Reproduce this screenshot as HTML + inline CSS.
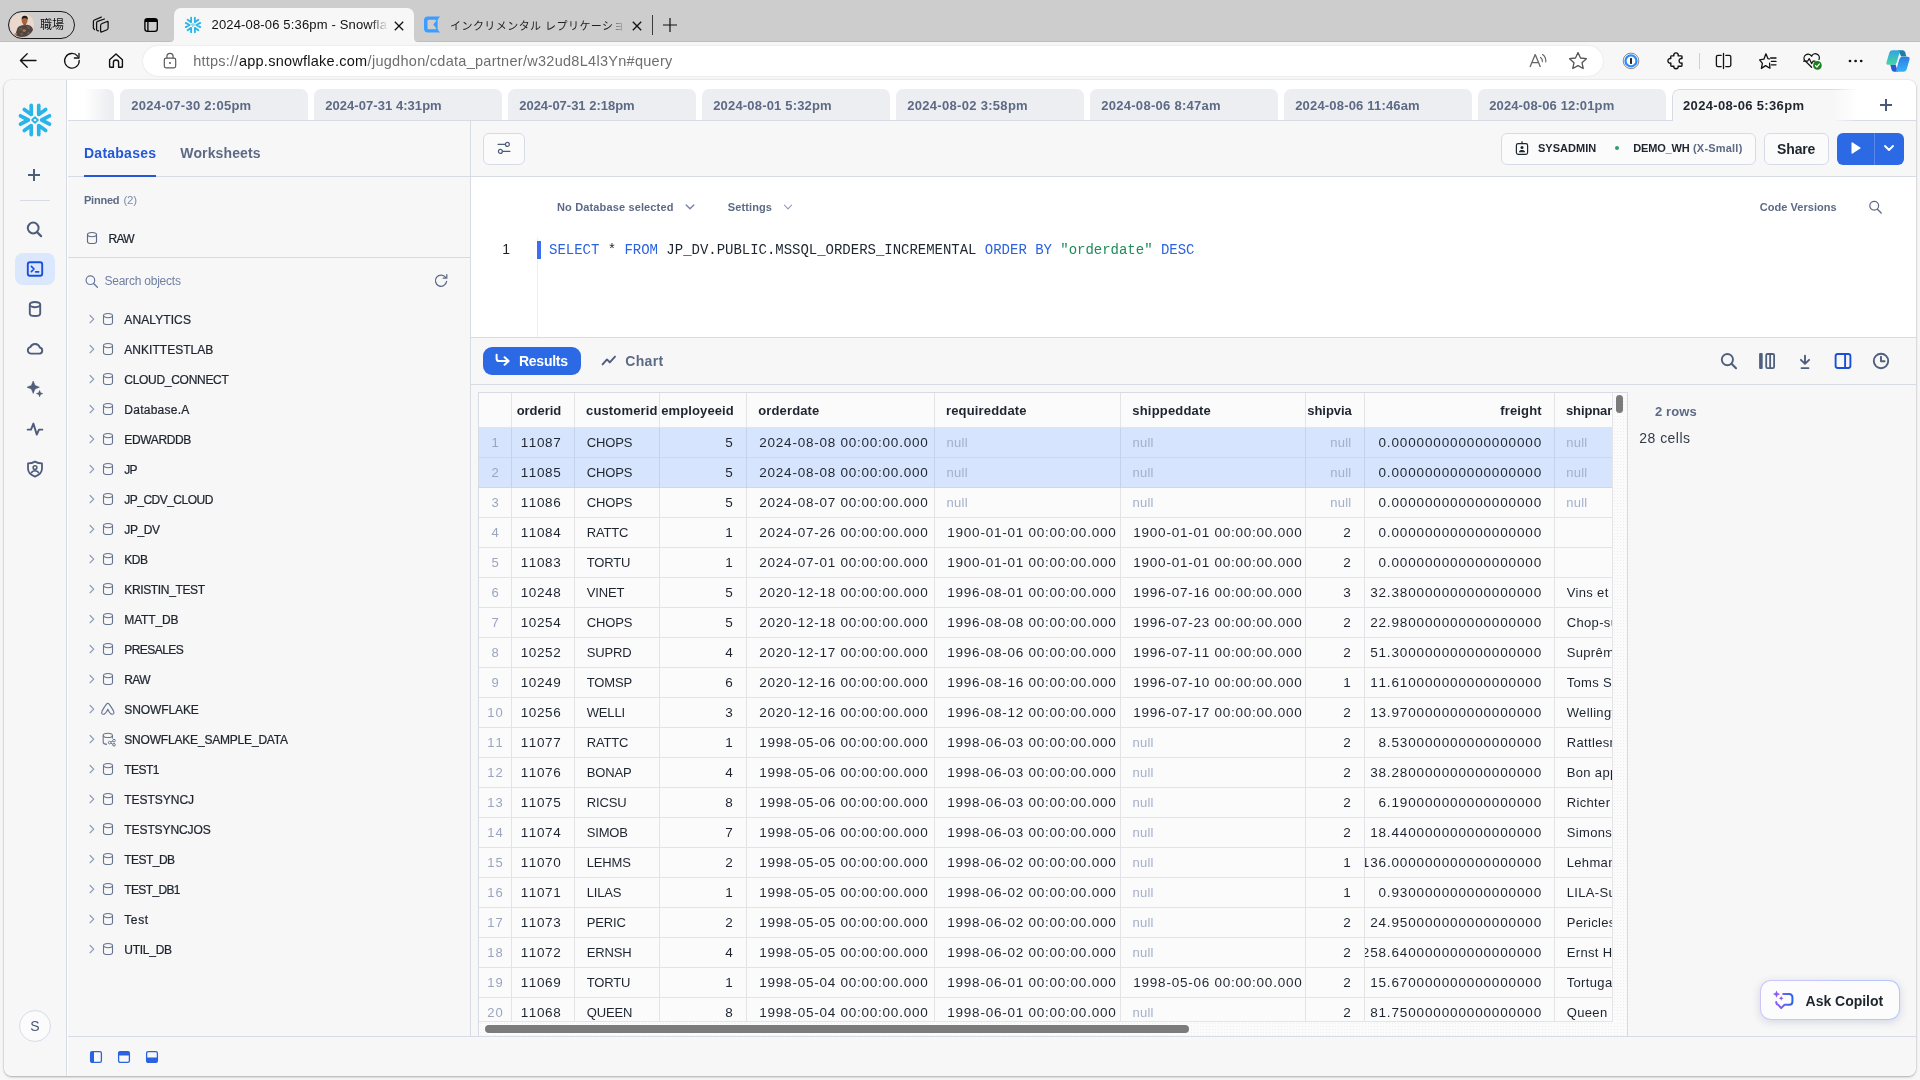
<!DOCTYPE html>
<html lang="ja"><head><meta charset="utf-8"><title>2024-08-06 5:36pm - Snowflake</title>
<style>
html,body{margin:0;padding:0}
body{width:1920px;height:1080px;position:relative;overflow:hidden;background:#f7f7f7;font-family:"Liberation Sans","Noto Sans CJK JP",sans-serif;}
div,svg{position:absolute;box-sizing:border-box}
div{white-space:pre}
.frame{left:4px;top:80px;width:1912px;height:996px;border-radius:8px;overflow:hidden;background:#fff;box-shadow:0 1px 2.5px rgba(0,0,0,.3),0 0 1px rgba(0,0,0,.25)}
.in{left:-4px;top:-80px;width:1920px;height:1080px}
.clip{overflow:hidden}
</style></head><body>
<div id="r" style="left:0;top:0;width:1920px;height:1080px;will-change:transform">
<div style="left:0px;top:0px;width:1920px;height:42px;background:#cdcdcd;"></div>
<div style="left:0px;top:41px;width:1920px;height:1px;background:#bebebe;"></div>
<div style="left:8px;top:11px;width:67px;height:27.5px;border:1px solid #1a1a1a;border-radius:14px;"></div>
<svg style="left:10px;top:13px;" width="24" height="24" viewBox="0 0 24 24"><defs><clipPath id="avc"><circle cx="12" cy="12" r="12"/></clipPath></defs><g clip-path="url(#avc)"><rect width="24" height="24" fill="#ead8cc"/><path d="M4.6 24.5 L7.4 15 Q8.6 12.6 12 12.2 L17.4 11.8 Q21.4 12.4 22.8 16 L23.6 19 L20 24.5Z" fill="#54433d"/><path d="M9 15.5 L12 14 L12.6 16.6 L9.6 18Z M17 13 L20 13.6 L19.4 16.4 L16.6 15.6Z M10 20 L13 19.4 L13.4 22 L10.6 22.6Z M16.6 19.4 L19.6 18.6 L20 21 L17 21.8Z" fill="#5b5a5c"/><ellipse cx="14.6" cy="7.6" rx="2.9" ry="3.7" fill="#a8633f"/><path d="M11.6 6.6 Q11.4 2.6 14.8 2.7 Q18.2 2.8 17.8 6.8 Q16.6 4.8 14.6 4.9 Q12.6 5 11.6 6.6Z" fill="#1c1917"/><path d="M13.4 10.2 Q14.6 11.6 15.9 10.2 L15.8 12.4 L13.4 12.4Z" fill="#8c4f33"/><ellipse cx="5" cy="21.4" rx="2.2" ry="1.1" fill="#c08662" transform="rotate(-25 5 21.4)"/><ellipse cx="14.2" cy="17.6" rx="1.7" ry="1.3" fill="#b4744f"/></g></svg>
<div style="left:40.00px;top:16.50px;font-size:12px;line-height:17px;color:#111;letter-spacing:-0.016px;">職場</div>
<svg style="left:92px;top:15px;" width="20" height="20" viewBox="0 0 20 20"><g fill="none" stroke="#111" stroke-width="1.25" stroke-linecap="round" stroke-linejoin="round"><path d="M9.3 2.1 L2.4 5 Q1.4 5.4 1.4 6.5 V12.8 Q1.4 13.6 2 14.1 L2.5 14.5"/><path d="M12.4 4 L5.6 6.45 Q4.6 6.8 4.6 7.9 V14.6 Q4.6 15.4 5.4 15.6 L6.5 15.9"/><rect x="8.6" y="12.75" width="7.5" height="8.2" rx="1.3" transform="skewY(-22.4)"/></g></svg>
<svg style="left:141px;top:15px;" width="20" height="20" viewBox="0 0 20 20"><rect x="3.9" y="3.7" width="12.4" height="12.6" rx="2.6" fill="none" stroke="#000" stroke-width="1.35"/><path d="M3.9 6.3 a2.6 2.6 0 0 1 2.6 -2.6 h7.2 a2.6 2.6 0 0 1 2.6 2.6 v0.7 h-12.4z" fill="#000"/><path d="M6.9 6.8 V16.3" stroke="#000" stroke-width="1.3"/></svg>
<div style="left:173.5px;top:8px;width:240.5px;height:34px;background:#f7f7f7;border-radius:7px 7px 0 0;"></div>
<svg style="left:169.5px;top:38px;" width="4" height="4" viewBox="0 0 4 4"><path d="M4 0 V4 H0 A4 4 0 0 0 4 0Z" fill="#f7f7f7"/></svg>
<svg style="left:414px;top:38px;" width="4" height="4" viewBox="0 0 4 4"><path d="M0 0 V4 H4 A4 4 0 0 1 0 0Z" fill="#f7f7f7"/></svg>
<svg style="left:184px;top:16px;" width="18" height="18" viewBox="0 0 18 18"><path d="M7.12 1.70 L7.12 6.20 L3.65 3.75M7.12 16.30 L7.12 11.80 L3.65 14.25M1.75 6.90 L5.65 9.00 L1.75 11.10M10.88 1.70 L10.88 6.20 L14.35 3.75M10.88 16.30 L10.88 11.80 L14.35 14.25M16.25 6.90 L12.35 9.00 L16.25 11.10" stroke="#29b5e8" stroke-width="1.85" stroke-linecap="round" stroke-linejoin="round" fill="none"/><path d="M9.00 7.55 L10.45 9.00 L9.00 10.45 L7.55 9.00Z" stroke="#29b5e8" stroke-width="0.90" stroke-linejoin="round" fill="none"/></svg>
<div class="clip" style="left:211.5px;top:14px;width:177px;height:22px;-webkit-mask-image:linear-gradient(90deg,#000 158px,transparent 176px);mask-image:linear-gradient(90deg,#000 158px,transparent 176px)"><div style="left:0;top:2px;font-size:13px;line-height:18px;color:#111;letter-spacing:0.158px">2024-08-06 5:36pm - Snowflake</div></div>
<svg style="left:392.5px;top:19.5px;" width="12" height="12" viewBox="0 0 12 12"><path d="M1.8 1.8 L10.2 10.2 M10.2 1.8 L1.8 10.2" stroke="#111" stroke-width="1.3" fill="none"/></svg>
<svg style="left:423px;top:16px;" width="18" height="17" viewBox="0 0 18 17"><path fill-rule="evenodd" d="M5 0.5 H17 L14.6 3.8 V13.2 L17 16.5 H5 A4 4 0 0 1 1 12.5 V4.5 A4 4 0 0 1 5 0.5Z M5.8 3.8 H12.8 L13 5 L10.3 8.5 L13 12 L12.8 13.2 H5.8 A1.3 1.3 0 0 1 4.5 11.9 V5.1 A1.3 1.3 0 0 1 5.8 3.8Z" fill="#3b9dff"/></svg>
<div class="clip" style="left:450px;top:14px;width:178px;height:22px;-webkit-mask-image:linear-gradient(90deg,#000 160px,transparent 176px);mask-image:linear-gradient(90deg,#000 160px,transparent 176px)"><div style="left:0;top:2.5px;font-size:11px;line-height:18px;color:#222;letter-spacing:0.444px">インクリメンタル レプリケーション</div></div>
<svg style="left:631px;top:19.5px;" width="12" height="12" viewBox="0 0 12 12"><path d="M1.8 1.8 L10.2 10.2 M10.2 1.8 L1.8 10.2" stroke="#111" stroke-width="1.3" fill="none"/></svg>
<div style="left:652px;top:15px;width:1px;height:20px;background:#3a3a3a;"></div>
<svg style="left:662px;top:17px;" width="16" height="16" viewBox="0 0 16 16"><path d="M8 1 V15 M1 8 H15" stroke="#111" stroke-width="1.2" fill="none"/></svg>
<div style="left:0px;top:42px;width:1920px;height:38px;background:#f7f7f7;"></div>
<svg style="left:18px;top:51px;" width="20" height="20" viewBox="0 0 20 20"><path d="M18 9.5 H2.6 M9.2 2.8 L2.4 9.5 L9.2 16.3" stroke="#111" stroke-width="1.3" fill="none" stroke-linecap="round" stroke-linejoin="round"/></svg>
<svg style="left:62px;top:51px;" width="20" height="20" viewBox="0 0 20 20"><path d="M15.6 5.2 A7.3 7.3 0 1 0 17.2 9.4" stroke="#111" stroke-width="1.3" fill="none" stroke-linecap="round"/><path d="M17 2.3 V7 H12.4" stroke="#111" stroke-width="1.3" fill="none" stroke-linecap="round" stroke-linejoin="round"/></svg>
<svg style="left:106px;top:51px;" width="20" height="20" viewBox="0 0 20 20"><path d="M3.6 8.8 L10 3 L16.4 8.8 V15.4 A0.8 0.8 0 0 1 15.6 16.2 H12.6 V11.6 A2.6 2.6 0 0 0 7.4 11.6 V16.2 H4.4 A0.8 0.8 0 0 1 3.6 15.4Z" stroke="#111" stroke-width="1.4" fill="none" stroke-linejoin="round"/></svg>
<div style="left:143px;top:46px;width:1460px;height:30px;background:#fff;border-radius:15px;box-shadow:0 0 2px rgba(0,0,0,.12);"></div>
<svg style="left:160px;top:51px;" width="20" height="20" viewBox="0 0 20 20"><rect x="4.3" y="7.2" width="11.4" height="9.6" rx="1.8" fill="none" stroke="#5a5a5a" stroke-width="1.2"/><path d="M6.9 7.2 V5.4 A3.1 3.1 0 0 1 13.1 5.4 V7.2" fill="none" stroke="#5a5a5a" stroke-width="1.2"/><circle cx="10" cy="12" r="1" fill="#5a5a5a"/></svg>
<div style="left:193.20px;top:51.00px;font-size:14.5px;line-height:20px;color:#6e6e6e;letter-spacing:0.238px;">https://</div>
<div style="left:238.90px;top:51.00px;font-size:14.5px;line-height:20px;color:#111;letter-spacing:0.255px;">app.snowflake.com</div>
<div style="left:367.60px;top:51.00px;font-size:14.5px;line-height:20px;color:#6e6e6e;letter-spacing:0.281px;">/jugdhon/cdata_partner/w32ud8L4l3Yn#query</div>
<svg style="left:1527px;top:50px;" width="22" height="22" viewBox="0 0 22 22"><path d="M3 17 L8.2 4.6 L13.4 17 M4.9 12.6 H11.5" stroke="#666" stroke-width="1.3" fill="none" stroke-linejoin="round"/><path d="M13.6 7.4 A4.5 4.5 0 0 1 15.4 11.6 M15.6 4.6 A8 8 0 0 1 18.8 11.8" stroke="#666" stroke-width="1.2" fill="none" stroke-linecap="round"/></svg>
<svg style="left:1567px;top:50px;" width="22" height="22" viewBox="0 0 22 22"><path d="M11 2.6 L13.5 8 L19.4 8.7 L15 12.7 L16.2 18.5 L11 15.6 L5.8 18.5 L7 12.7 L2.6 8.7 L8.5 8Z" stroke="#555" stroke-width="1.3" fill="none" stroke-linejoin="round"/></svg>
<svg style="left:1620px;top:50px;" width="22" height="22" viewBox="0 0 22 22"><circle cx="11" cy="10.9" r="7.8" fill="#fff" stroke="#6a6a6a" stroke-width="0.8"/><circle cx="11" cy="10.9" r="5.5" fill="#fff" stroke="#2b8bff" stroke-width="2.3"/><rect x="10.1" y="7.9" width="1.8" height="6.1" rx="0.4" fill="#111"/></svg>
<svg style="left:1664px;top:50px;" width="22" height="22" viewBox="0 0 22 22"><path d="M7.6 5.8 H9.9 C9.4 4.2 10.4 2.9 12 2.9 C13.6 2.9 14.6 4.2 14.1 5.8 H17.2 Q18 5.8 18 6.6 V8.6 C16.4 8.1 15.1 9.2 15.1 10.8 C15.1 12.4 16.4 13.5 18 13 V15.4 Q18 16.2 17.2 16.2 H14.1 C14.6 17.6 13.6 18.7 12 18.7 C10.4 18.7 9.4 17.6 9.9 16.2 H7.6 Q6.8 16.2 6.8 15.4 V13 C5.2 13.5 3.9 12.4 3.9 10.8 C3.9 9.2 5.2 8.1 6.8 8.6 V6.6 Q6.8 5.8 7.6 5.8Z" stroke="#111" stroke-width="1.35" fill="none" stroke-linejoin="round"/></svg>
<div style="left:1699px;top:53px;width:1px;height:16px;background:#cfcfcf;"></div>
<svg style="left:1712px;top:50px;" width="22" height="22" viewBox="0 0 22 22"><path d="M9.2 5.3 H6 A1.6 1.6 0 0 0 4.4 6.9 V15 A1.6 1.6 0 0 0 6 16.6 H9.2 M13.8 5.3 H17.2 A1.6 1.6 0 0 1 18.8 6.9 V15 A1.6 1.6 0 0 1 17.2 16.6 H13.8 M11.5 3.3 V18.6" stroke="#111" stroke-width="1.3" fill="none" stroke-linecap="round"/></svg>
<svg style="left:1757px;top:50px;" width="22" height="22" viewBox="0 0 22 22"><path d="M12.6 13.2 L12.9 18.2 L8.6 15.6 L4.4 18.4 L5.4 13.4 L2.6 9.9 L6.9 9.2 L8.9 3.8 L10.9 8.6 L12.4 8.8" stroke="#111" stroke-width="1.3" fill="none" stroke-linejoin="round" stroke-linecap="round"/><path d="M13.6 8 H19 M14.4 11.4 H19 M14.4 14.8 H19" stroke="#111" stroke-width="1.3" fill="none" stroke-linecap="round"/></svg>
<svg style="left:1800px;top:50px;" width="24" height="22" viewBox="0 0 24 22"><path d="M11.6 17.2 L4.6 10.4 A3.9 3.9 0 0 1 11.6 6.2 A3.9 3.9 0 0 1 19 9.4" stroke="#111" stroke-width="1.3" fill="none" stroke-linecap="round" stroke-linejoin="round"/><path d="M3.6 11.2 H7.6 L9.2 8.6 L11.6 13.6 L13 11.2 H15" stroke="#111" stroke-width="1.2" fill="none" stroke-linejoin="round" stroke-linecap="round"/><circle cx="17.4" cy="15.4" r="4.3" fill="#1a7f1a"/><path d="M15.4 15.5 L16.9 17 L19.5 13.9" stroke="#fff" stroke-width="1.2" fill="none" stroke-linecap="round" stroke-linejoin="round"/></svg>
<svg style="left:1845px;top:50px;" width="22" height="22" viewBox="0 0 22 22"><circle cx="5" cy="11" r="1.35" fill="#111"/><circle cx="10.6" cy="11" r="1.35" fill="#111"/><circle cx="16.2" cy="11" r="1.35" fill="#111"/></svg>
<svg style="left:1885px;top:48px;" width="26" height="26" viewBox="0 0 26 26"><defs><linearGradient id="cp1" x1="0" y1="0" x2="0" y2="1"><stop offset="0" stop-color="#2fa4e2"/><stop offset="1" stop-color="#48d6a2"/></linearGradient><linearGradient id="cp2" x1="0" y1="0" x2="0" y2="1"><stop offset="0" stop-color="#2f7ce6"/><stop offset="1" stop-color="#36b2f6"/></linearGradient></defs><path d="M13 2.2 H17.6 Q19.6 2.2 20.2 4.2 L21.4 8.4 H16.2 Z" fill="#1f7da8"/><path d="M5.2 16.6 H10.6 L12.8 23.8 H9.2 Q7.2 23.8 6.6 21.8 Z" fill="#2b57d9"/><path d="M7.6 2.2 H15.2 L11.8 14.2 Q11.1 16.8 8.6 16.8 H3.4 Q0.8 16.8 1.5 14.2 L4.4 4.4 Q5.1 2.2 7.6 2.2Z" fill="url(#cp1)"/><path d="M18.4 23.8 H10.8 L14.2 11.4 Q14.9 8.8 17.4 8.8 H22.6 Q25.2 8.8 24.5 11.4 L21.6 21.6 Q20.9 23.8 18.4 23.8Z" fill="url(#cp2)"/></svg>
<div class="frame"><div class="in">
<div style="left:4px;top:80px;width:63px;height:996px;background:#f7f7f7;border-right:1px solid #d6dbe6;"></div>
<svg style="left:17px;top:102px;" width="36" height="36" viewBox="0 0 36 36"><path d="M14.25 3.40 L14.25 12.40 L7.30 7.50M14.25 32.60 L14.25 23.60 L7.30 28.50M3.50 13.80 L11.30 18.00 L3.50 22.20M21.75 3.40 L21.75 12.40 L28.70 7.50M21.75 32.60 L21.75 23.60 L28.70 28.50M32.50 13.80 L24.70 18.00 L32.50 22.20" stroke="#29b5e8" stroke-width="3.70" stroke-linecap="round" stroke-linejoin="round" fill="none"/><path d="M18.00 15.10 L20.90 18.00 L18.00 20.90 L15.10 18.00Z" stroke="#29b5e8" stroke-width="1.80" stroke-linejoin="round" fill="none"/></svg>
<svg style="left:26px;top:167px;" width="16" height="16" viewBox="0 0 16 16"><path d="M8 2 V14 M2 8 H14" stroke="#4f5d7c" stroke-width="2" fill="none"/></svg>
<div style="left:20px;top:200px;width:30px;height:1px;background:#d6dbe6;"></div>
<svg style="left:25px;top:219.5px;" width="20" height="20" viewBox="0 0 20 20"><circle cx="8.2" cy="8" r="5.4" fill="none" stroke="#4f5d7c" stroke-width="2"/><path d="M12.2 12.2 L16.1 16.1" stroke="#4f5d7c" stroke-width="2.2" stroke-linecap="round"/></svg>
<div style="left:15px;top:253px;width:40px;height:32px;background:#dbe7fd;border-radius:8px;"></div>
<svg style="left:25px;top:259px;" width="20" height="20" viewBox="0 0 20 20"><rect x="2.8" y="3.2" width="14.4" height="13.6" rx="2" fill="none" stroke="#1b4fd8" stroke-width="1.9"/><path d="M6.4 7.4 L9 10 L6.4 12.6 M10.6 12.8 H13.6" stroke="#1b4fd8" stroke-width="1.7" fill="none" stroke-linecap="round" stroke-linejoin="round"/></svg>
<svg style="left:25px;top:299px;" width="20" height="20" viewBox="0 0 20 20"><ellipse cx="10" cy="5.6" rx="5.2" ry="2.6" fill="none" stroke="#4f5d7c" stroke-width="1.9"/><path d="M4.8 5.6 V14.4 A5.2 2.6 0 0 0 15.2 14.4 V5.6" fill="none" stroke="#4f5d7c" stroke-width="1.9"/></svg>
<svg style="left:24px;top:339px;" width="22" height="20" viewBox="0 0 22 20"><path d="M6.8 14.6 A3.3 3.3 0 0 1 6.4 8.1 A5 5 0 0 1 15.8 8.5 A3.1 3.1 0 0 1 15.6 14.6 Z" fill="none" stroke="#4f5d7c" stroke-width="1.9" stroke-linejoin="round"/></svg>
<svg style="left:25px;top:379px;" width="20" height="20" viewBox="0 0 20 20"><path d="M8.2 2 L10 6.4 L14.4 8.2 L10 10 L8.2 14.4 L6.4 10 L2 8.2 L6.4 6.4Z" fill="#4f5d7c" stroke="#4f5d7c" stroke-width="0.6" stroke-linejoin="round"/><path d="M14.6 11.4 L15.5 13.7 L17.8 14.6 L15.5 15.5 L14.6 17.8 L13.7 15.5 L11.4 14.6 L13.7 13.7Z" fill="#4f5d7c" stroke="#4f5d7c" stroke-width="0.5" stroke-linejoin="round"/></svg>
<svg style="left:25px;top:419px;" width="20" height="20" viewBox="0 0 20 20"><path d="M2.6 10.6 H6 L8.4 4.6 L11.8 15.6 L14 10.6 H17.4" fill="none" stroke="#4f5d7c" stroke-width="1.9" stroke-linejoin="round" stroke-linecap="round"/></svg>
<svg style="left:25px;top:459px;" width="20" height="20" viewBox="0 0 20 20"><path d="M10 2.6 C12.4 4 14.6 4.4 17 4.4 V9.6 C17 13.6 14 16.2 10 17.6 C6 16.2 3 13.6 3 9.6 V4.4 C5.4 4.4 7.6 4 10 2.6Z" fill="none" stroke="#4f5d7c" stroke-width="1.8" stroke-linejoin="round"/><circle cx="10" cy="8.6" r="1.9" fill="none" stroke="#4f5d7c" stroke-width="1.5"/><path d="M6.2 14.2 C7 12.4 8.4 11.8 10 11.8 C11.6 11.8 13 12.4 13.8 14.2" fill="none" stroke="#4f5d7c" stroke-width="1.5"/></svg>
<div style="left:19px;top:1010px;width:32px;height:32px;background:#fbfbfc;border:1px solid #d6dbe6;border-radius:16px;"></div>
<div style="left:30.33px;top:1016.00px;font-size:14px;line-height:20px;color:#4a5876;">S</div>
<div style="left:67px;top:80px;width:1849px;height:41px;background:#fff;"></div>
<div style="left:68px;top:120px;width:1848px;height:1px;background:#d6dbe6;"></div>
<div style="left:84px;top:89px;width:30px;height:31px;border-radius:0 7px 0 0;background:linear-gradient(90deg,rgba(237,238,242,0) 0,#edeef2 26px);"></div>
<div style="left:120px;top:89px;width:188px;height:31px;background:#edeef2;border-radius:7px 7px 0 0;"></div>
<div style="left:131.20px;top:96.50px;font-size:13px;line-height:18px;color:#5d6a85;font-weight:700;letter-spacing:0.272px;">2024-07-30 2:05pm</div>
<div style="left:314px;top:89px;width:188px;height:31px;background:#edeef2;border-radius:7px 7px 0 0;"></div>
<div style="left:325.20px;top:96.50px;font-size:13px;line-height:18px;color:#5d6a85;font-weight:700;letter-spacing:0.054px;">2024-07-31 4:31pm</div>
<div style="left:508px;top:89px;width:188px;height:31px;background:#edeef2;border-radius:7px 7px 0 0;"></div>
<div style="left:519.20px;top:96.50px;font-size:13px;line-height:18px;color:#5d6a85;font-weight:700;letter-spacing:-0.009px;">2024-07-31 2:18pm</div>
<div style="left:702px;top:89px;width:188px;height:31px;background:#edeef2;border-radius:7px 7px 0 0;"></div>
<div style="left:713.20px;top:96.50px;font-size:13px;line-height:18px;color:#5d6a85;font-weight:700;letter-spacing:0.179px;">2024-08-01 5:32pm</div>
<div style="left:896px;top:89px;width:188px;height:31px;background:#edeef2;border-radius:7px 7px 0 0;"></div>
<div style="left:907.20px;top:96.50px;font-size:13px;line-height:18px;color:#5d6a85;font-weight:700;letter-spacing:0.304px;">2024-08-02 3:58pm</div>
<div style="left:1090px;top:89px;width:188px;height:31px;background:#edeef2;border-radius:7px 7px 0 0;"></div>
<div style="left:1101.20px;top:96.50px;font-size:13px;line-height:18px;color:#5d6a85;font-weight:700;letter-spacing:0.286px;">2024-08-06 8:47am</div>
<div style="left:1284px;top:89px;width:188px;height:31px;background:#edeef2;border-radius:7px 7px 0 0;"></div>
<div style="left:1295.20px;top:96.50px;font-size:13px;line-height:18px;color:#5d6a85;font-weight:700;letter-spacing:0.180px;">2024-08-06 11:46am</div>
<div style="left:1478px;top:89px;width:188px;height:31px;background:#edeef2;border-radius:7px 7px 0 0;"></div>
<div style="left:1489.20px;top:96.50px;font-size:13px;line-height:18px;color:#5d6a85;font-weight:700;letter-spacing:0.126px;">2024-08-06 12:01pm</div>
<div style="left:1672px;top:89px;width:188px;height:32px;border-radius:7px 0 0 0;border:1px solid #d6dbe6;border-right:none;border-bottom:none;background:#f7f7f7;-webkit-mask-image:linear-gradient(90deg,#000 160px,transparent 186px);mask-image:linear-gradient(90deg,#000 160px,transparent 186px);"></div>
<div style="left:1683.00px;top:96.50px;font-size:13px;line-height:18px;color:#1e252f;font-weight:700;letter-spacing:0.335px;">2024-08-06 5:36pm</div>
<svg style="left:1879px;top:98px;" width="14" height="14" viewBox="0 0 14 14"><path d="M7 1 V13 M1 7 H13" stroke="#4a5a7c" stroke-width="2" fill="none"/></svg>
<div style="left:68px;top:121px;width:403px;height:955px;background:#f7f7f7;border-right:1px solid #d6dbe6;"></div>
<div style="left:84.00px;top:142.70px;font-size:14px;line-height:20px;color:#2458d6;font-weight:700;letter-spacing:0.244px;">Databases</div>
<div style="left:180.30px;top:142.70px;font-size:14px;line-height:20px;color:#5d6a85;font-weight:700;letter-spacing:0.132px;">Worksheets</div>
<div style="left:68px;top:176px;width:402px;height:1px;background:#d6dbe6;"></div>
<div style="left:84px;top:175px;width:72px;height:2px;background:#2458d6;"></div>
<div style="left:84.00px;top:192.50px;font-size:11px;line-height:15px;color:#5d6a85;font-weight:700;letter-spacing:-0.234px;">Pinned</div>
<div style="left:123.50px;top:192.00px;font-size:11.5px;line-height:16px;color:#7d8bab;letter-spacing:-0.281px;">(2)</div>
<svg style="left:86px;top:231px;" width="12" height="14" viewBox="0 0 12 14"><ellipse cx="6.0" cy="3.6" rx="4.5" ry="2.1" fill="none" stroke="#5d6a85" stroke-width="1.15"/><path d="M1.5 3.6 V10.4 A4.5 2.1 0 0 0 10.5 10.4 V3.6" fill="none" stroke="#5d6a85" stroke-width="1.15"/></svg>
<div style="left:108.40px;top:231.00px;font-size:12px;line-height:17px;color:#1e252f;-webkit-text-stroke:0.24px;letter-spacing:-0.681px;">RAW</div>
<div style="left:68px;top:257px;width:402px;height:1px;background:#d6dbe6;"></div>
<svg style="left:84px;top:274px;" width="16" height="16" viewBox="0 0 16 16"><circle cx="6.4" cy="6.2" r="4.3" fill="none" stroke="#6878a0" stroke-width="1.2"/><path d="M9.6 9.5 L13.4 13.3" stroke="#6878a0" stroke-width="1.3" stroke-linecap="round"/></svg>
<div style="left:104.40px;top:272.50px;font-size:12px;line-height:17px;color:#7080a2;letter-spacing:-0.215px;">Search objects</div>
<svg style="left:432px;top:272px;" width="18" height="18" viewBox="0 0 18 18"><path d="M13.6 5.4 A5.6 5.6 0 1 0 14.6 9.4" stroke="#5d6a85" stroke-width="1.25" fill="none" stroke-linecap="round"/><path d="M14.8 2.6 V6.2 H11.2" stroke="#5d6a85" stroke-width="1.25" fill="none" stroke-linecap="round" stroke-linejoin="round"/></svg>
<svg style="left:87px;top:313px;" width="10" height="12" viewBox="0 0 10 12"><path d="M3.1 2.5 L6.7 6.1 L3.1 9.7" stroke="#8f9cb8" stroke-width="1.25" fill="none" stroke-linecap="round" stroke-linejoin="round"/></svg>
<svg style="left:102px;top:312px;" width="12" height="14" viewBox="0 0 12 14"><ellipse cx="6.0" cy="3.6" rx="4.5" ry="2.1" fill="none" stroke="#67758f" stroke-width="1.1"/><path d="M1.5 3.6 V10.4 A4.5 2.1 0 0 0 10.5 10.4 V3.6" fill="none" stroke="#67758f" stroke-width="1.1"/></svg>
<div style="left:124.30px;top:311.70px;font-size:12px;line-height:17px;color:#1e252f;-webkit-text-stroke:0.24px;letter-spacing:0.100px;">ANALYTICS</div>
<svg style="left:87px;top:343px;" width="10" height="12" viewBox="0 0 10 12"><path d="M3.1 2.5 L6.7 6.1 L3.1 9.7" stroke="#8f9cb8" stroke-width="1.25" fill="none" stroke-linecap="round" stroke-linejoin="round"/></svg>
<svg style="left:102px;top:342px;" width="12" height="14" viewBox="0 0 12 14"><ellipse cx="6.0" cy="3.6" rx="4.5" ry="2.1" fill="none" stroke="#67758f" stroke-width="1.1"/><path d="M1.5 3.6 V10.4 A4.5 2.1 0 0 0 10.5 10.4 V3.6" fill="none" stroke="#67758f" stroke-width="1.1"/></svg>
<div style="left:124.30px;top:341.70px;font-size:12px;line-height:17px;color:#1e252f;-webkit-text-stroke:0.24px;letter-spacing:0.028px;">ANKITTESTLAB</div>
<svg style="left:87px;top:373px;" width="10" height="12" viewBox="0 0 10 12"><path d="M3.1 2.5 L6.7 6.1 L3.1 9.7" stroke="#8f9cb8" stroke-width="1.25" fill="none" stroke-linecap="round" stroke-linejoin="round"/></svg>
<svg style="left:102px;top:372px;" width="12" height="14" viewBox="0 0 12 14"><ellipse cx="6.0" cy="3.6" rx="4.5" ry="2.1" fill="none" stroke="#67758f" stroke-width="1.1"/><path d="M1.5 3.6 V10.4 A4.5 2.1 0 0 0 10.5 10.4 V3.6" fill="none" stroke="#67758f" stroke-width="1.1"/></svg>
<div style="left:124.30px;top:371.70px;font-size:12px;line-height:17px;color:#1e252f;-webkit-text-stroke:0.24px;letter-spacing:-0.293px;">CLOUD_CONNECT</div>
<svg style="left:87px;top:403px;" width="10" height="12" viewBox="0 0 10 12"><path d="M3.1 2.5 L6.7 6.1 L3.1 9.7" stroke="#8f9cb8" stroke-width="1.25" fill="none" stroke-linecap="round" stroke-linejoin="round"/></svg>
<svg style="left:102px;top:402px;" width="12" height="14" viewBox="0 0 12 14"><ellipse cx="6.0" cy="3.6" rx="4.5" ry="2.1" fill="none" stroke="#67758f" stroke-width="1.1"/><path d="M1.5 3.6 V10.4 A4.5 2.1 0 0 0 10.5 10.4 V3.6" fill="none" stroke="#67758f" stroke-width="1.1"/></svg>
<div style="left:124.30px;top:401.70px;font-size:12px;line-height:17px;color:#1e252f;-webkit-text-stroke:0.24px;letter-spacing:0.253px;">Database.A</div>
<svg style="left:87px;top:433px;" width="10" height="12" viewBox="0 0 10 12"><path d="M3.1 2.5 L6.7 6.1 L3.1 9.7" stroke="#8f9cb8" stroke-width="1.25" fill="none" stroke-linecap="round" stroke-linejoin="round"/></svg>
<svg style="left:102px;top:432px;" width="12" height="14" viewBox="0 0 12 14"><ellipse cx="6.0" cy="3.6" rx="4.5" ry="2.1" fill="none" stroke="#67758f" stroke-width="1.1"/><path d="M1.5 3.6 V10.4 A4.5 2.1 0 0 0 10.5 10.4 V3.6" fill="none" stroke="#67758f" stroke-width="1.1"/></svg>
<div style="left:124.30px;top:431.70px;font-size:12px;line-height:17px;color:#1e252f;-webkit-text-stroke:0.24px;letter-spacing:-0.366px;">EDWARDDB</div>
<svg style="left:87px;top:463px;" width="10" height="12" viewBox="0 0 10 12"><path d="M3.1 2.5 L6.7 6.1 L3.1 9.7" stroke="#8f9cb8" stroke-width="1.25" fill="none" stroke-linecap="round" stroke-linejoin="round"/></svg>
<svg style="left:102px;top:462px;" width="12" height="14" viewBox="0 0 12 14"><ellipse cx="6.0" cy="3.6" rx="4.5" ry="2.1" fill="none" stroke="#67758f" stroke-width="1.1"/><path d="M1.5 3.6 V10.4 A4.5 2.1 0 0 0 10.5 10.4 V3.6" fill="none" stroke="#67758f" stroke-width="1.1"/></svg>
<div style="left:124.30px;top:461.70px;font-size:12px;line-height:17px;color:#1e252f;-webkit-text-stroke:0.24px;letter-spacing:-0.766px;">JP</div>
<svg style="left:87px;top:493px;" width="10" height="12" viewBox="0 0 10 12"><path d="M3.1 2.5 L6.7 6.1 L3.1 9.7" stroke="#8f9cb8" stroke-width="1.25" fill="none" stroke-linecap="round" stroke-linejoin="round"/></svg>
<svg style="left:102px;top:492px;" width="12" height="14" viewBox="0 0 12 14"><ellipse cx="6.0" cy="3.6" rx="4.5" ry="2.1" fill="none" stroke="#67758f" stroke-width="1.1"/><path d="M1.5 3.6 V10.4 A4.5 2.1 0 0 0 10.5 10.4 V3.6" fill="none" stroke="#67758f" stroke-width="1.1"/></svg>
<div style="left:124.30px;top:491.70px;font-size:12px;line-height:17px;color:#1e252f;-webkit-text-stroke:0.24px;letter-spacing:-0.518px;">JP_CDV_CLOUD</div>
<svg style="left:87px;top:523px;" width="10" height="12" viewBox="0 0 10 12"><path d="M3.1 2.5 L6.7 6.1 L3.1 9.7" stroke="#8f9cb8" stroke-width="1.25" fill="none" stroke-linecap="round" stroke-linejoin="round"/></svg>
<svg style="left:102px;top:522px;" width="12" height="14" viewBox="0 0 12 14"><ellipse cx="6.0" cy="3.6" rx="4.5" ry="2.1" fill="none" stroke="#67758f" stroke-width="1.1"/><path d="M1.5 3.6 V10.4 A4.5 2.1 0 0 0 10.5 10.4 V3.6" fill="none" stroke="#67758f" stroke-width="1.1"/></svg>
<div style="left:124.30px;top:521.70px;font-size:12px;line-height:17px;color:#1e252f;-webkit-text-stroke:0.24px;letter-spacing:-0.402px;">JP_DV</div>
<svg style="left:87px;top:553px;" width="10" height="12" viewBox="0 0 10 12"><path d="M3.1 2.5 L6.7 6.1 L3.1 9.7" stroke="#8f9cb8" stroke-width="1.25" fill="none" stroke-linecap="round" stroke-linejoin="round"/></svg>
<svg style="left:102px;top:552px;" width="12" height="14" viewBox="0 0 12 14"><ellipse cx="6.0" cy="3.6" rx="4.5" ry="2.1" fill="none" stroke="#67758f" stroke-width="1.1"/><path d="M1.5 3.6 V10.4 A4.5 2.1 0 0 0 10.5 10.4 V3.6" fill="none" stroke="#67758f" stroke-width="1.1"/></svg>
<div style="left:124.30px;top:551.70px;font-size:12px;line-height:17px;color:#1e252f;-webkit-text-stroke:0.24px;letter-spacing:-0.469px;">KDB</div>
<svg style="left:87px;top:583px;" width="10" height="12" viewBox="0 0 10 12"><path d="M3.1 2.5 L6.7 6.1 L3.1 9.7" stroke="#8f9cb8" stroke-width="1.25" fill="none" stroke-linecap="round" stroke-linejoin="round"/></svg>
<svg style="left:102px;top:582px;" width="12" height="14" viewBox="0 0 12 14"><ellipse cx="6.0" cy="3.6" rx="4.5" ry="2.1" fill="none" stroke="#67758f" stroke-width="1.1"/><path d="M1.5 3.6 V10.4 A4.5 2.1 0 0 0 10.5 10.4 V3.6" fill="none" stroke="#67758f" stroke-width="1.1"/></svg>
<div style="left:124.30px;top:581.70px;font-size:12px;line-height:17px;color:#1e252f;-webkit-text-stroke:0.24px;letter-spacing:-0.358px;">KRISTIN_TEST</div>
<svg style="left:87px;top:613px;" width="10" height="12" viewBox="0 0 10 12"><path d="M3.1 2.5 L6.7 6.1 L3.1 9.7" stroke="#8f9cb8" stroke-width="1.25" fill="none" stroke-linecap="round" stroke-linejoin="round"/></svg>
<svg style="left:102px;top:612px;" width="12" height="14" viewBox="0 0 12 14"><ellipse cx="6.0" cy="3.6" rx="4.5" ry="2.1" fill="none" stroke="#67758f" stroke-width="1.1"/><path d="M1.5 3.6 V10.4 A4.5 2.1 0 0 0 10.5 10.4 V3.6" fill="none" stroke="#67758f" stroke-width="1.1"/></svg>
<div style="left:124.30px;top:611.70px;font-size:12px;line-height:17px;color:#1e252f;-webkit-text-stroke:0.24px;letter-spacing:-0.146px;">MATT_DB</div>
<svg style="left:87px;top:643px;" width="10" height="12" viewBox="0 0 10 12"><path d="M3.1 2.5 L6.7 6.1 L3.1 9.7" stroke="#8f9cb8" stroke-width="1.25" fill="none" stroke-linecap="round" stroke-linejoin="round"/></svg>
<svg style="left:102px;top:642px;" width="12" height="14" viewBox="0 0 12 14"><ellipse cx="6.0" cy="3.6" rx="4.5" ry="2.1" fill="none" stroke="#67758f" stroke-width="1.1"/><path d="M1.5 3.6 V10.4 A4.5 2.1 0 0 0 10.5 10.4 V3.6" fill="none" stroke="#67758f" stroke-width="1.1"/></svg>
<div style="left:124.30px;top:641.70px;font-size:12px;line-height:17px;color:#1e252f;-webkit-text-stroke:0.24px;letter-spacing:-0.554px;">PRESALES</div>
<svg style="left:87px;top:673px;" width="10" height="12" viewBox="0 0 10 12"><path d="M3.1 2.5 L6.7 6.1 L3.1 9.7" stroke="#8f9cb8" stroke-width="1.25" fill="none" stroke-linecap="round" stroke-linejoin="round"/></svg>
<svg style="left:102px;top:672px;" width="12" height="14" viewBox="0 0 12 14"><ellipse cx="6.0" cy="3.6" rx="4.5" ry="2.1" fill="none" stroke="#67758f" stroke-width="1.1"/><path d="M1.5 3.6 V10.4 A4.5 2.1 0 0 0 10.5 10.4 V3.6" fill="none" stroke="#67758f" stroke-width="1.1"/></svg>
<div style="left:124.30px;top:671.70px;font-size:12px;line-height:17px;color:#1e252f;-webkit-text-stroke:0.24px;letter-spacing:-0.656px;">RAW</div>
<svg style="left:87px;top:703px;" width="10" height="12" viewBox="0 0 10 12"><path d="M3.1 2.5 L6.7 6.1 L3.1 9.7" stroke="#8f9cb8" stroke-width="1.25" fill="none" stroke-linecap="round" stroke-linejoin="round"/></svg>
<svg style="left:100.3px;top:702px;" width="16" height="14" viewBox="0 0 16 14"><path d="M7.8 7.2 C6.8 9.4 5.4 12 3.6 12.2 C1.8 12.4 1.2 10.8 2 9.2 C3 7 5.6 3.4 6.6 2 C7.2 1.1 8.4 1.1 9 2 C10 3.4 12.6 7 13.6 9.2 C14.4 10.8 13.8 12.4 12 12.2 C10.2 12 8.8 9.4 7.8 7.2Z" fill="none" stroke="#67758f" stroke-width="1.15" stroke-linejoin="round"/></svg>
<div style="left:124.30px;top:701.70px;font-size:12px;line-height:17px;color:#1e252f;-webkit-text-stroke:0.24px;letter-spacing:-0.107px;">SNOWFLAKE</div>
<svg style="left:87px;top:733px;" width="10" height="12" viewBox="0 0 10 12"><path d="M3.1 2.5 L6.7 6.1 L3.1 9.7" stroke="#8f9cb8" stroke-width="1.25" fill="none" stroke-linecap="round" stroke-linejoin="round"/></svg>
<svg style="left:102px;top:732px;" width="16" height="15" viewBox="0 0 16 15"><ellipse cx="5.8" cy="3.4" rx="4.6" ry="2.1" fill="none" stroke="#67758f" stroke-width="1.1"/><path d="M1.2 3.4 V10.4 A4.6 2.1 0 0 0 5 12.4 M10.4 3.4 V6.4" fill="none" stroke="#67758f" stroke-width="1.1"/><circle cx="7.6" cy="10.6" r="1.3" fill="none" stroke="#67758f" stroke-width="1"/><circle cx="12" cy="8.6" r="1.3" fill="none" stroke="#67758f" stroke-width="1"/><circle cx="12" cy="12.8" r="1.3" fill="none" stroke="#67758f" stroke-width="1"/><path d="M8.8 10 L10.8 9.1 M8.8 11.2 L10.8 12.2" stroke="#67758f" stroke-width="1"/></svg>
<div style="left:124.30px;top:731.70px;font-size:12px;line-height:17px;color:#1e252f;-webkit-text-stroke:0.24px;letter-spacing:-0.193px;">SNOWFLAKE_SAMPLE_DATA</div>
<svg style="left:87px;top:763px;" width="10" height="12" viewBox="0 0 10 12"><path d="M3.1 2.5 L6.7 6.1 L3.1 9.7" stroke="#8f9cb8" stroke-width="1.25" fill="none" stroke-linecap="round" stroke-linejoin="round"/></svg>
<svg style="left:102px;top:762px;" width="12" height="14" viewBox="0 0 12 14"><ellipse cx="6.0" cy="3.6" rx="4.5" ry="2.1" fill="none" stroke="#67758f" stroke-width="1.1"/><path d="M1.5 3.6 V10.4 A4.5 2.1 0 0 0 10.5 10.4 V3.6" fill="none" stroke="#67758f" stroke-width="1.1"/></svg>
<div style="left:124.30px;top:761.70px;font-size:12px;line-height:17px;color:#1e252f;-webkit-text-stroke:0.24px;letter-spacing:-0.523px;">TEST1</div>
<svg style="left:87px;top:793px;" width="10" height="12" viewBox="0 0 10 12"><path d="M3.1 2.5 L6.7 6.1 L3.1 9.7" stroke="#8f9cb8" stroke-width="1.25" fill="none" stroke-linecap="round" stroke-linejoin="round"/></svg>
<svg style="left:102px;top:792px;" width="12" height="14" viewBox="0 0 12 14"><ellipse cx="6.0" cy="3.6" rx="4.5" ry="2.1" fill="none" stroke="#67758f" stroke-width="1.1"/><path d="M1.5 3.6 V10.4 A4.5 2.1 0 0 0 10.5 10.4 V3.6" fill="none" stroke="#67758f" stroke-width="1.1"/></svg>
<div style="left:124.30px;top:791.70px;font-size:12px;line-height:17px;color:#1e252f;-webkit-text-stroke:0.24px;letter-spacing:-0.033px;">TESTSYNCJ</div>
<svg style="left:87px;top:823px;" width="10" height="12" viewBox="0 0 10 12"><path d="M3.1 2.5 L6.7 6.1 L3.1 9.7" stroke="#8f9cb8" stroke-width="1.25" fill="none" stroke-linecap="round" stroke-linejoin="round"/></svg>
<svg style="left:102px;top:822px;" width="12" height="14" viewBox="0 0 12 14"><ellipse cx="6.0" cy="3.6" rx="4.5" ry="2.1" fill="none" stroke="#67758f" stroke-width="1.1"/><path d="M1.5 3.6 V10.4 A4.5 2.1 0 0 0 10.5 10.4 V3.6" fill="none" stroke="#67758f" stroke-width="1.1"/></svg>
<div style="left:124.30px;top:821.70px;font-size:12px;line-height:17px;color:#1e252f;-webkit-text-stroke:0.24px;letter-spacing:-0.086px;">TESTSYNCJOS</div>
<svg style="left:87px;top:853px;" width="10" height="12" viewBox="0 0 10 12"><path d="M3.1 2.5 L6.7 6.1 L3.1 9.7" stroke="#8f9cb8" stroke-width="1.25" fill="none" stroke-linecap="round" stroke-linejoin="round"/></svg>
<svg style="left:102px;top:852px;" width="12" height="14" viewBox="0 0 12 14"><ellipse cx="6.0" cy="3.6" rx="4.5" ry="2.1" fill="none" stroke="#67758f" stroke-width="1.1"/><path d="M1.5 3.6 V10.4 A4.5 2.1 0 0 0 10.5 10.4 V3.6" fill="none" stroke="#67758f" stroke-width="1.1"/></svg>
<div style="left:124.30px;top:851.70px;font-size:12px;line-height:17px;color:#1e252f;-webkit-text-stroke:0.24px;letter-spacing:-0.544px;">TEST_DB</div>
<svg style="left:87px;top:883px;" width="10" height="12" viewBox="0 0 10 12"><path d="M3.1 2.5 L6.7 6.1 L3.1 9.7" stroke="#8f9cb8" stroke-width="1.25" fill="none" stroke-linecap="round" stroke-linejoin="round"/></svg>
<svg style="left:102px;top:882px;" width="12" height="14" viewBox="0 0 12 14"><ellipse cx="6.0" cy="3.6" rx="4.5" ry="2.1" fill="none" stroke="#67758f" stroke-width="1.1"/><path d="M1.5 3.6 V10.4 A4.5 2.1 0 0 0 10.5 10.4 V3.6" fill="none" stroke="#67758f" stroke-width="1.1"/></svg>
<div style="left:124.30px;top:881.70px;font-size:12px;line-height:17px;color:#1e252f;-webkit-text-stroke:0.24px;letter-spacing:-0.634px;">TEST_DB1</div>
<svg style="left:87px;top:913px;" width="10" height="12" viewBox="0 0 10 12"><path d="M3.1 2.5 L6.7 6.1 L3.1 9.7" stroke="#8f9cb8" stroke-width="1.25" fill="none" stroke-linecap="round" stroke-linejoin="round"/></svg>
<svg style="left:102px;top:912px;" width="12" height="14" viewBox="0 0 12 14"><ellipse cx="6.0" cy="3.6" rx="4.5" ry="2.1" fill="none" stroke="#67758f" stroke-width="1.1"/><path d="M1.5 3.6 V10.4 A4.5 2.1 0 0 0 10.5 10.4 V3.6" fill="none" stroke="#67758f" stroke-width="1.1"/></svg>
<div style="left:124.30px;top:911.70px;font-size:12px;line-height:17px;color:#1e252f;-webkit-text-stroke:0.24px;letter-spacing:0.578px;">Test</div>
<svg style="left:87px;top:943px;" width="10" height="12" viewBox="0 0 10 12"><path d="M3.1 2.5 L6.7 6.1 L3.1 9.7" stroke="#8f9cb8" stroke-width="1.25" fill="none" stroke-linecap="round" stroke-linejoin="round"/></svg>
<svg style="left:102px;top:942px;" width="12" height="14" viewBox="0 0 12 14"><ellipse cx="6.0" cy="3.6" rx="4.5" ry="2.1" fill="none" stroke="#67758f" stroke-width="1.1"/><path d="M1.5 3.6 V10.4 A4.5 2.1 0 0 0 10.5 10.4 V3.6" fill="none" stroke="#67758f" stroke-width="1.1"/></svg>
<div style="left:124.30px;top:941.70px;font-size:12px;line-height:17px;color:#1e252f;-webkit-text-stroke:0.24px;letter-spacing:-0.268px;">UTIL_DB</div>
<div style="left:68px;top:1036px;width:1848px;height:1px;background:#d6dbe6;"></div>
<div style="left:68px;top:1037px;width:1848px;height:39px;background:#f7f7f7;"></div>
<svg style="left:89px;top:1050px;" width="14" height="14" viewBox="0 0 14 14"><rect x="1.6" y="1.6" width="10.8" height="10.8" rx="1.6" fill="#f7f7f7" stroke="#2a62e2" stroke-width="1.3"/><path d="M1.6 3 A1.4 1.4 0 0 1 3 1.6 H5 V12.4 H3 A1.4 1.4 0 0 1 1.6 11Z" fill="#2a62e2"/></svg>
<svg style="left:117px;top:1050px;" width="14" height="14" viewBox="0 0 14 14"><rect x="1.6" y="1.6" width="10.8" height="10.8" rx="1.6" fill="#f7f7f7" stroke="#2a62e2" stroke-width="1.3"/><path d="M3 1.6 H11 A1.4 1.4 0 0 1 12.4 3 V5.4 H1.6 V3 A1.4 1.4 0 0 1 3 1.6Z" fill="#2a62e2"/></svg>
<svg style="left:145px;top:1050px;" width="14" height="14" viewBox="0 0 14 14"><rect x="1.6" y="1.6" width="10.8" height="10.8" rx="1.6" fill="#f7f7f7" stroke="#2a62e2" stroke-width="1.3"/><path d="M1.6 7.6 H12.4 V11 A1.4 1.4 0 0 1 11 12.4 H3 A1.4 1.4 0 0 1 1.6 11Z" fill="#2a62e2"/></svg>
<div style="left:471px;top:121px;width:1445px;height:55px;background:#f7f7f7;"></div>
<div style="left:471px;top:176px;width:1445px;height:1px;background:#d6dbe6;"></div>
<div style="left:483px;top:133px;width:42px;height:32px;background:#fbfbfb;border:1px solid #d6dbe6;border-radius:6px;"></div>
<svg style="left:496px;top:141px;" width="16" height="16" viewBox="0 0 16 16"><path d="M2.1 3.4 H9.4 M6.4 10.4 H13.9" stroke="#4f5d7c" stroke-width="1.2" fill="none" stroke-linecap="round"/><circle cx="11.4" cy="3.4" r="1.95" fill="none" stroke="#4f5d7c" stroke-width="1.2"/><circle cx="4.4" cy="10.4" r="1.95" fill="none" stroke="#4f5d7c" stroke-width="1.2"/></svg>
<div style="left:1501px;top:133px;width:255px;height:32px;background:#fbfbfb;border:1px solid #d6dbe6;border-radius:6px;"></div>
<svg style="left:1514px;top:140px;" width="16" height="16" viewBox="0 0 16 16"><rect x="2.4" y="3.6" width="11.2" height="10.8" rx="1.8" fill="none" stroke="#1e252f" stroke-width="1.2"/><path d="M8 1.2 V3.6" stroke="#1e252f" stroke-width="1.2"/><circle cx="8" cy="7.6" r="1.5" fill="#1e252f"/><path d="M4.8 12.2 C5.2 10.4 6.6 9.9 8 9.9 C9.4 9.9 10.8 10.4 11.2 12.2Z" fill="#1e252f"/></svg>
<div style="left:1538.00px;top:140.50px;font-size:11px;line-height:15px;color:#1e252f;font-weight:700;letter-spacing:0.034px;">SYSADMIN</div>
<div style="left:1615px;top:146px;width:4px;height:4px;background:#2e9e6b;border-radius:2px;"></div>
<div style="left:1633.20px;top:140.50px;font-size:11px;line-height:15px;color:#1e252f;font-weight:700;letter-spacing:-0.159px;">DEMO_WH</div>
<div style="left:1693.00px;top:140.50px;font-size:11px;line-height:15px;color:#5d6a85;font-weight:700;letter-spacing:0.202px;">(X-Small)</div>
<div style="left:1764px;top:133px;width:65px;height:32px;background:#fbfbfb;border:1px solid #d6dbe6;border-radius:6px;"></div>
<div style="left:1777.00px;top:138.50px;font-size:14px;line-height:20px;color:#1e252f;font-weight:700;letter-spacing:-0.130px;">Share</div>
<div style="left:1837px;top:133px;width:67px;height:32px;background:#2c6ae5;border-radius:6px;"></div>
<div style="left:1874px;top:133px;width:1px;height:32px;background:#5a86ee;"></div>
<svg style="left:1848px;top:140px;" width="16" height="16" viewBox="0 0 16 16"><path d="M4.2 3 L11.9 8 L4.2 13Z" fill="#fff" stroke="#fff" stroke-width="1.4" stroke-linejoin="round"/></svg>
<svg style="left:1882px;top:141px;" width="14" height="14" viewBox="0 0 14 14"><path d="M3 5 L7 9 L11 5" stroke="#fff" stroke-width="1.9" fill="none" stroke-linecap="round" stroke-linejoin="round"/></svg>
<div style="left:471px;top:177px;width:1445px;height:160px;background:#fff;"></div>
<div style="left:557.00px;top:199.50px;font-size:11px;line-height:15px;color:#5d6a85;font-weight:700;letter-spacing:0.141px;">No Database selected</div>
<svg style="left:684px;top:201px;" width="12" height="12" viewBox="0 0 12 12"><path d="M2.2 4 L6 7.8 L9.8 4" stroke="#7a87a4" stroke-width="1.5" fill="none" stroke-linecap="round" stroke-linejoin="round"/></svg>
<div style="left:727.80px;top:199.50px;font-size:11px;line-height:15px;color:#5d6a85;font-weight:700;letter-spacing:0.113px;">Settings</div>
<svg style="left:782px;top:201px;" width="12" height="12" viewBox="0 0 12 12"><path d="M2.4 4.2 L6 7.8 L9.6 4.2" stroke="#8f9cb8" stroke-width="1.1" fill="none" stroke-linecap="round" stroke-linejoin="round"/></svg>
<div style="left:1759.70px;top:199.50px;font-size:11px;line-height:15px;color:#5d6a85;font-weight:700;letter-spacing:0.048px;">Code Versions</div>
<svg style="left:1867px;top:199px;" width="16" height="16" viewBox="0 0 16 16"><circle cx="7.2" cy="6.8" r="4.4" fill="none" stroke="#5d6a85" stroke-width="1.2"/><path d="M10.4 10.2 L14.2 14" stroke="#5d6a85" stroke-width="1.3" stroke-linecap="round"/></svg>
<div style="left:537px;top:237px;width:1px;height:100px;background:#efeff3;"></div>
<div style="left:537px;top:241px;width:4px;height:18px;background:#3b6ff0;"></div>
<div style="left:502.20px;top:238.50px;font-size:14px;line-height:20px;color:#222;font-family:"Liberation Mono",monospace;">1</div>
<div style="left:549px;top:239.5px;font-family:'Liberation Mono',monospace;font-size:14px;line-height:20px;letter-spacing:-0.020px"><span style="color:#2b62e0">SELECT</span><span style="color:#1e252f"> * </span><span style="color:#2b62e0">FROM</span><span style="color:#1e252f"> JP_DV.PUBLIC.MSSQL_ORDERS_INCREMENTAL </span><span style="color:#2b62e0">ORDER BY</span><span style="color:#1e252f"> </span><span style="color:#1f8a5b">"orderdate"</span><span style="color:#1e252f"> </span><span style="color:#2b62e0">DESC</span></div>
<div style="left:471px;top:337px;width:1445px;height:1px;background:#d6dbe6;"></div>
<div style="left:471px;top:338px;width:1445px;height:46px;background:#f7f7f7;"></div>
<div style="left:471px;top:384px;width:1445px;height:1px;background:#d6dbe6;"></div>
<div style="left:471px;top:385px;width:1445px;height:651px;background:#f7f7f7;"></div>
<div style="left:483px;top:347px;width:98px;height:28px;background:#2c6ae5;border-radius:9px;"></div>
<svg style="left:494px;top:352px;" width="18" height="16" viewBox="0 0 18 16"><path d="M2.6 2.8 V6.4 A2.6 2.6 0 0 0 5.2 9 H14.2 M10.6 5.2 L14.6 9 L10.6 12.8" stroke="#fff" stroke-width="2" fill="none" stroke-linecap="round" stroke-linejoin="round"/></svg>
<div style="left:519.00px;top:351.00px;font-size:14px;line-height:20px;color:#fff;font-weight:700;letter-spacing:-0.263px;">Results</div>
<svg style="left:600px;top:352px;" width="18" height="18" viewBox="0 0 18 18"><path d="M2.6 12.4 L7 7.4 L9.8 10.4 L15 4.6" stroke="#4f5d7c" stroke-width="1.9" fill="none" stroke-linecap="round" stroke-linejoin="round"/></svg>
<div style="left:625.20px;top:351.00px;font-size:14px;line-height:20px;color:#5d6a85;font-weight:700;letter-spacing:0.359px;">Chart</div>
<svg style="left:1719px;top:351px;" width="20" height="20" viewBox="0 0 20 20"><circle cx="8.4" cy="8.6" r="5.6" fill="none" stroke="#515f7e" stroke-width="1.9"/><path d="M12.6 12.8 L17 17.2" stroke="#515f7e" stroke-width="2.1" stroke-linecap="round"/></svg>
<svg style="left:1757px;top:351px;" width="20" height="20" viewBox="0 0 20 20"><rect x="2.1" y="2.1" width="3.6" height="15.9" rx="1" fill="#515f7e"/><rect x="9.2" y="3" width="7.9" height="14.1" rx="1.3" fill="none" stroke="#515f7e" stroke-width="1.8"/><path d="M13.15 3 V17" stroke="#515f7e" stroke-width="1.8"/></svg>
<svg style="left:1795px;top:351px;" width="20" height="20" viewBox="0 0 20 20"><path d="M10 4.6 V12.4 M5.9 8.8 L10 12.9 L14.1 8.8 M6.5 17.1 H13.5" stroke="#515f7e" stroke-width="1.9" fill="none" stroke-linecap="round" stroke-linejoin="round"/></svg>
<svg style="left:1833px;top:351px;" width="20" height="20" viewBox="0 0 20 20"><rect x="2.6" y="3" width="14.8" height="14" rx="2.2" fill="none" stroke="#1b4fd8" stroke-width="1.9"/><path d="M12.1 3 V17" stroke="#1b4fd8" stroke-width="1.9"/></svg>
<svg style="left:1871px;top:351px;" width="20" height="20" viewBox="0 0 20 20"><circle cx="10" cy="10" r="7.2" fill="none" stroke="#515f7e" stroke-width="1.9"/><path d="M10 5.8 V10.2 H13.6" stroke="#515f7e" stroke-width="1.9" fill="none" stroke-linecap="round" stroke-linejoin="round"/></svg>
<div style="left:1655.00px;top:402.50px;font-size:13px;line-height:18px;color:#5d6a85;font-weight:700;letter-spacing:0.103px;">2 rows</div>
<div style="left:1639.30px;top:427.80px;font-size:14px;line-height:20px;color:#333b48;letter-spacing:0.462px;">28 cells</div>
<div style="left:1760px;top:980px;width:140px;height:40px;border-radius:11px;background:linear-gradient(90deg,#cfc6fb,#b3c6fd);box-shadow:0 2px 9px rgba(70,80,140,.20);"></div>
<div style="left:1761px;top:981px;width:138px;height:38px;background:#fcfcfd;border-radius:10px;"></div>
<svg style="left:1771px;top:988px;" width="24" height="24" viewBox="0 0 24 24"><defs><linearGradient id="ac" x1="4" y1="0" x2="22" y2="0" gradientUnits="userSpaceOnUse"><stop offset="0" stop-color="#8b5cf6"/><stop offset="0.45" stop-color="#7360f2"/><stop offset="1" stop-color="#2563eb"/></linearGradient></defs><path d="M12.2 6.1 H18.4 A3 3 0 0 1 21.4 9.1 V13.7 A3 3 0 0 1 18.4 16.7 H13.5 L10.2 20.1 L7.3 16.9 A3 3 0 0 1 5.2 14" fill="none" stroke="url(#ac)" stroke-width="2" stroke-linecap="round" stroke-linejoin="round"/><path d="M5.5 2.4 L6.6 5 L9.2 6.1 L6.6 7.2 L5.5 9.8 L4.4 7.2 L1.8 6.1 L4.4 5Z" fill="#8b5cf6"/><path d="M10.2 7.9 L10.9 9.6 L12.6 10.3 L10.9 11 L10.2 12.7 L9.5 11 L7.8 10.3 L9.5 9.6Z" fill="#8457f5"/></svg>
<div style="left:1805.60px;top:990.80px;font-size:14px;line-height:20px;color:#1e252f;font-weight:700;letter-spacing:-0.028px;">Ask Copilot</div>
<div style="left:478px;top:392px;width:1150px;height:645px;background:#fbfbfc;border:1px solid #d6dbe6;"></div>
<div style="left:479px;top:428px;width:1133px;height:60px;background:#d6e5fd;"></div>
<div style="left:479px;top:427px;width:1133px;height:1px;background:#e4e4e7;"></div>
<div style="left:479px;top:457px;width:1133px;height:1px;background:#c9d9f3;"></div>
<div style="left:479px;top:487px;width:1133px;height:1px;background:#c9d9f3;"></div>
<div style="left:479px;top:517px;width:1133px;height:1px;background:#e4e4e7;"></div>
<div style="left:479px;top:547px;width:1133px;height:1px;background:#e4e4e7;"></div>
<div style="left:479px;top:577px;width:1133px;height:1px;background:#e4e4e7;"></div>
<div style="left:479px;top:607px;width:1133px;height:1px;background:#e4e4e7;"></div>
<div style="left:479px;top:637px;width:1133px;height:1px;background:#e4e4e7;"></div>
<div style="left:479px;top:667px;width:1133px;height:1px;background:#e4e4e7;"></div>
<div style="left:479px;top:697px;width:1133px;height:1px;background:#e4e4e7;"></div>
<div style="left:479px;top:727px;width:1133px;height:1px;background:#e4e4e7;"></div>
<div style="left:479px;top:757px;width:1133px;height:1px;background:#e4e4e7;"></div>
<div style="left:479px;top:787px;width:1133px;height:1px;background:#e4e4e7;"></div>
<div style="left:479px;top:817px;width:1133px;height:1px;background:#e4e4e7;"></div>
<div style="left:479px;top:847px;width:1133px;height:1px;background:#e4e4e7;"></div>
<div style="left:479px;top:877px;width:1133px;height:1px;background:#e4e4e7;"></div>
<div style="left:479px;top:907px;width:1133px;height:1px;background:#e4e4e7;"></div>
<div style="left:479px;top:937px;width:1133px;height:1px;background:#e4e4e7;"></div>
<div style="left:479px;top:967px;width:1133px;height:1px;background:#e4e4e7;"></div>
<div style="left:479px;top:997px;width:1133px;height:1px;background:#e4e4e7;"></div>
<div style="left:511px;top:393px;width:1px;height:629px;background:#e4e4e7;"></div>
<div style="left:574px;top:393px;width:1px;height:629px;background:#e4e4e7;"></div>
<div style="left:659px;top:393px;width:1px;height:629px;background:#e4e4e7;"></div>
<div style="left:746px;top:393px;width:1px;height:629px;background:#e4e4e7;"></div>
<div style="left:934px;top:393px;width:1px;height:629px;background:#e4e4e7;"></div>
<div style="left:1120px;top:393px;width:1px;height:629px;background:#e4e4e7;"></div>
<div style="left:1305px;top:393px;width:1px;height:629px;background:#e4e4e7;"></div>
<div style="left:1364px;top:393px;width:1px;height:629px;background:#e4e4e7;"></div>
<div style="left:1554px;top:393px;width:1px;height:629px;background:#e4e4e7;"></div>
<div style="left:1612px;top:393px;width:1px;height:629px;background:#e4e4e7;"></div>
<div style="left:511px;top:428px;width:1px;height:60px;background:#c3d3ee;"></div>
<div style="left:574px;top:428px;width:1px;height:60px;background:#c3d3ee;"></div>
<div style="left:659px;top:428px;width:1px;height:60px;background:#c3d3ee;"></div>
<div style="left:746px;top:428px;width:1px;height:60px;background:#c3d3ee;"></div>
<div style="left:934px;top:428px;width:1px;height:60px;background:#c3d3ee;"></div>
<div style="left:1120px;top:428px;width:1px;height:60px;background:#c3d3ee;"></div>
<div style="left:1305px;top:428px;width:1px;height:60px;background:#c3d3ee;"></div>
<div style="left:1364px;top:428px;width:1px;height:60px;background:#c3d3ee;"></div>
<div style="left:1554px;top:428px;width:1px;height:60px;background:#c3d3ee;"></div>
<div style="left:516.70px;top:401.50px;font-size:13px;line-height:18px;color:#1e252f;font-weight:700;letter-spacing:-0.033px;">orderid</div>
<div style="left:586.00px;top:401.50px;font-size:13px;line-height:18px;color:#1e252f;font-weight:700;letter-spacing:0.158px;">customerid</div>
<div style="left:661.30px;top:401.50px;font-size:13px;line-height:18px;color:#1e252f;font-weight:700;letter-spacing:0.097px;">employeeid</div>
<div style="left:758.30px;top:401.50px;font-size:13px;line-height:18px;color:#1e252f;font-weight:700;letter-spacing:0.129px;">orderdate</div>
<div style="left:946.00px;top:401.50px;font-size:13px;line-height:18px;color:#1e252f;font-weight:700;letter-spacing:0.159px;">requireddate</div>
<div style="left:1132.30px;top:401.50px;font-size:13px;line-height:18px;color:#1e252f;font-weight:700;letter-spacing:0.192px;">shippeddate</div>
<div style="left:1307.30px;top:401.50px;font-size:13px;line-height:18px;color:#1e252f;font-weight:700;letter-spacing:-0.066px;">shipvia</div>
<div style="left:1500.20px;top:401.50px;font-size:13px;line-height:18px;color:#1e252f;font-weight:700;letter-spacing:0.174px;">freight</div>
<div class="clip" style="left:1555px;top:394px;width:57px;height:33px"><div style="left:11px;top:7.5px;font-size:13px;line-height:18px;font-weight:700;color:#1e252f;letter-spacing:-0.111px">shipname</div></div>
<div style="left:491.38px;top:433.60px;font-size:13px;line-height:18px;color:#9ba6bd;font-kerning:none;">1</div>
<div style="left:520.70px;top:433.60px;font-size:13.5px;line-height:18px;color:#1e252f;font-kerning:none;letter-spacing:0.613px;">11087</div>
<div style="left:586.70px;top:433.60px;font-size:13px;line-height:18px;color:#1e252f;letter-spacing:-0.150px;">CHOPS</div>
<div style="left:725.18px;top:433.60px;font-size:13.5px;line-height:18px;color:#1e252f;font-kerning:none;">5</div>
<div style="left:759.30px;top:433.60px;font-size:13.5px;line-height:18px;color:#1e252f;font-kerning:none;letter-spacing:0.762px;">2024-08-08 00:00:00.000</div>
<div style="left:946.60px;top:433.60px;font-size:13px;line-height:18px;color:#a3b0c9;letter-spacing:0.250px;">null</div>
<div style="left:1132.50px;top:433.60px;font-size:13px;line-height:18px;color:#a3b0c9;letter-spacing:0.250px;">null</div>
<div style="left:1330.20px;top:433.60px;font-size:13px;line-height:18px;color:#a3b0c9;letter-spacing:0.250px;">null</div>
<div class="clip" style="left:1365px;top:433.6px;width:189px;height:18px"><div style="left:13.50px;top:0;font-size:13.5px;line-height:18px;color:#1e252f;font-kerning:none;letter-spacing:0.858px">0.000000000000000000</div></div>
<div style="left:1566.20px;top:433.60px;font-size:13px;line-height:18px;color:#a3b0c9;letter-spacing:0.250px;">null</div>
<div style="left:491.38px;top:463.60px;font-size:13px;line-height:18px;color:#9ba6bd;font-kerning:none;">2</div>
<div style="left:520.70px;top:463.60px;font-size:13.5px;line-height:18px;color:#1e252f;font-kerning:none;letter-spacing:0.613px;">11085</div>
<div style="left:586.70px;top:463.60px;font-size:13px;line-height:18px;color:#1e252f;letter-spacing:-0.150px;">CHOPS</div>
<div style="left:725.18px;top:463.60px;font-size:13.5px;line-height:18px;color:#1e252f;font-kerning:none;">5</div>
<div style="left:759.30px;top:463.60px;font-size:13.5px;line-height:18px;color:#1e252f;font-kerning:none;letter-spacing:0.762px;">2024-08-08 00:00:00.000</div>
<div style="left:946.60px;top:463.60px;font-size:13px;line-height:18px;color:#a3b0c9;letter-spacing:0.250px;">null</div>
<div style="left:1132.50px;top:463.60px;font-size:13px;line-height:18px;color:#a3b0c9;letter-spacing:0.250px;">null</div>
<div style="left:1330.20px;top:463.60px;font-size:13px;line-height:18px;color:#a3b0c9;letter-spacing:0.250px;">null</div>
<div class="clip" style="left:1365px;top:463.6px;width:189px;height:18px"><div style="left:13.50px;top:0;font-size:13.5px;line-height:18px;color:#1e252f;font-kerning:none;letter-spacing:0.858px">0.000000000000000000</div></div>
<div style="left:1566.20px;top:463.60px;font-size:13px;line-height:18px;color:#a3b0c9;letter-spacing:0.250px;">null</div>
<div style="left:491.38px;top:493.60px;font-size:13px;line-height:18px;color:#9ba6bd;font-kerning:none;">3</div>
<div style="left:520.70px;top:493.60px;font-size:13.5px;line-height:18px;color:#1e252f;font-kerning:none;letter-spacing:0.613px;">11086</div>
<div style="left:586.70px;top:493.60px;font-size:13px;line-height:18px;color:#1e252f;letter-spacing:-0.150px;">CHOPS</div>
<div style="left:725.18px;top:493.60px;font-size:13.5px;line-height:18px;color:#1e252f;font-kerning:none;">5</div>
<div style="left:759.30px;top:493.60px;font-size:13.5px;line-height:18px;color:#1e252f;font-kerning:none;letter-spacing:0.762px;">2024-08-07 00:00:00.000</div>
<div style="left:946.60px;top:493.60px;font-size:13px;line-height:18px;color:#a3b0c9;letter-spacing:0.250px;">null</div>
<div style="left:1132.50px;top:493.60px;font-size:13px;line-height:18px;color:#a3b0c9;letter-spacing:0.250px;">null</div>
<div style="left:1330.20px;top:493.60px;font-size:13px;line-height:18px;color:#a3b0c9;letter-spacing:0.250px;">null</div>
<div class="clip" style="left:1365px;top:493.6px;width:189px;height:18px"><div style="left:13.50px;top:0;font-size:13.5px;line-height:18px;color:#1e252f;font-kerning:none;letter-spacing:0.858px">0.000000000000000000</div></div>
<div style="left:1566.20px;top:493.60px;font-size:13px;line-height:18px;color:#a3b0c9;letter-spacing:0.250px;">null</div>
<div style="left:491.38px;top:523.60px;font-size:13px;line-height:18px;color:#9ba6bd;font-kerning:none;">4</div>
<div style="left:520.70px;top:523.60px;font-size:13.5px;line-height:18px;color:#1e252f;font-kerning:none;letter-spacing:0.613px;">11084</div>
<div style="left:586.70px;top:523.60px;font-size:13px;line-height:18px;color:#1e252f;letter-spacing:-0.150px;">RATTC</div>
<div style="left:725.18px;top:523.60px;font-size:13.5px;line-height:18px;color:#1e252f;font-kerning:none;">1</div>
<div style="left:759.30px;top:523.60px;font-size:13.5px;line-height:18px;color:#1e252f;font-kerning:none;letter-spacing:0.762px;">2024-07-26 00:00:00.000</div>
<div style="left:947.30px;top:523.60px;font-size:13.5px;line-height:18px;color:#1e252f;font-kerning:none;letter-spacing:0.762px;">1900-01-01 00:00:00.000</div>
<div style="left:1133.30px;top:523.60px;font-size:13.5px;line-height:18px;color:#1e252f;font-kerning:none;letter-spacing:0.762px;">1900-01-01 00:00:00.000</div>
<div style="left:1343.28px;top:523.60px;font-size:13.5px;line-height:18px;color:#1e252f;font-kerning:none;">2</div>
<div class="clip" style="left:1365px;top:523.6px;width:189px;height:18px"><div style="left:13.50px;top:0;font-size:13.5px;line-height:18px;color:#1e252f;font-kerning:none;letter-spacing:0.858px">0.000000000000000000</div></div>
<div style="left:491.38px;top:553.60px;font-size:13px;line-height:18px;color:#9ba6bd;font-kerning:none;">5</div>
<div style="left:520.70px;top:553.60px;font-size:13.5px;line-height:18px;color:#1e252f;font-kerning:none;letter-spacing:0.613px;">11083</div>
<div style="left:586.70px;top:553.60px;font-size:13px;line-height:18px;color:#1e252f;letter-spacing:-0.150px;">TORTU</div>
<div style="left:725.18px;top:553.60px;font-size:13.5px;line-height:18px;color:#1e252f;font-kerning:none;">1</div>
<div style="left:759.30px;top:553.60px;font-size:13.5px;line-height:18px;color:#1e252f;font-kerning:none;letter-spacing:0.762px;">2024-07-01 00:00:00.000</div>
<div style="left:947.30px;top:553.60px;font-size:13.5px;line-height:18px;color:#1e252f;font-kerning:none;letter-spacing:0.762px;">1900-01-01 00:00:00.000</div>
<div style="left:1133.30px;top:553.60px;font-size:13.5px;line-height:18px;color:#1e252f;font-kerning:none;letter-spacing:0.762px;">1900-01-01 00:00:00.000</div>
<div style="left:1343.28px;top:553.60px;font-size:13.5px;line-height:18px;color:#1e252f;font-kerning:none;">2</div>
<div class="clip" style="left:1365px;top:553.6px;width:189px;height:18px"><div style="left:13.50px;top:0;font-size:13.5px;line-height:18px;color:#1e252f;font-kerning:none;letter-spacing:0.858px">0.000000000000000000</div></div>
<div style="left:491.38px;top:583.60px;font-size:13px;line-height:18px;color:#9ba6bd;font-kerning:none;">6</div>
<div style="left:520.70px;top:583.60px;font-size:13.5px;line-height:18px;color:#1e252f;font-kerning:none;letter-spacing:0.613px;">10248</div>
<div style="left:586.70px;top:583.60px;font-size:13px;line-height:18px;color:#1e252f;letter-spacing:-0.150px;">VINET</div>
<div style="left:725.18px;top:583.60px;font-size:13.5px;line-height:18px;color:#1e252f;font-kerning:none;">5</div>
<div style="left:759.30px;top:583.60px;font-size:13.5px;line-height:18px;color:#1e252f;font-kerning:none;letter-spacing:0.762px;">2020-12-18 00:00:00.000</div>
<div style="left:947.30px;top:583.60px;font-size:13.5px;line-height:18px;color:#1e252f;font-kerning:none;letter-spacing:0.762px;">1996-08-01 00:00:00.000</div>
<div style="left:1133.30px;top:583.60px;font-size:13.5px;line-height:18px;color:#1e252f;font-kerning:none;letter-spacing:0.762px;">1996-07-16 00:00:00.000</div>
<div style="left:1343.28px;top:583.60px;font-size:13.5px;line-height:18px;color:#1e252f;font-kerning:none;">3</div>
<div class="clip" style="left:1365px;top:583.6px;width:189px;height:18px"><div style="left:5.13px;top:0;font-size:13.5px;line-height:18px;color:#1e252f;font-kerning:none;letter-spacing:0.858px">32.380000000000000000</div></div>
<div class="clip" style="left:1555px;top:583.6px;width:57px;height:18px"><div style="left:11.7px;top:0;font-size:13px;line-height:18px;color:#1e252f;letter-spacing:0.35px">Vins et alcools Chevalier</div></div>
<div style="left:491.38px;top:613.60px;font-size:13px;line-height:18px;color:#9ba6bd;font-kerning:none;">7</div>
<div style="left:520.70px;top:613.60px;font-size:13.5px;line-height:18px;color:#1e252f;font-kerning:none;letter-spacing:0.613px;">10254</div>
<div style="left:586.70px;top:613.60px;font-size:13px;line-height:18px;color:#1e252f;letter-spacing:-0.150px;">CHOPS</div>
<div style="left:725.18px;top:613.60px;font-size:13.5px;line-height:18px;color:#1e252f;font-kerning:none;">5</div>
<div style="left:759.30px;top:613.60px;font-size:13.5px;line-height:18px;color:#1e252f;font-kerning:none;letter-spacing:0.762px;">2020-12-18 00:00:00.000</div>
<div style="left:947.30px;top:613.60px;font-size:13.5px;line-height:18px;color:#1e252f;font-kerning:none;letter-spacing:0.762px;">1996-08-08 00:00:00.000</div>
<div style="left:1133.30px;top:613.60px;font-size:13.5px;line-height:18px;color:#1e252f;font-kerning:none;letter-spacing:0.762px;">1996-07-23 00:00:00.000</div>
<div style="left:1343.28px;top:613.60px;font-size:13.5px;line-height:18px;color:#1e252f;font-kerning:none;">2</div>
<div class="clip" style="left:1365px;top:613.6px;width:189px;height:18px"><div style="left:5.13px;top:0;font-size:13.5px;line-height:18px;color:#1e252f;font-kerning:none;letter-spacing:0.858px">22.980000000000000000</div></div>
<div class="clip" style="left:1555px;top:613.6px;width:57px;height:18px"><div style="left:11.7px;top:0;font-size:13px;line-height:18px;color:#1e252f;letter-spacing:0.35px">Chop-suey Chinese</div></div>
<div style="left:491.38px;top:643.60px;font-size:13px;line-height:18px;color:#9ba6bd;font-kerning:none;">8</div>
<div style="left:520.70px;top:643.60px;font-size:13.5px;line-height:18px;color:#1e252f;font-kerning:none;letter-spacing:0.613px;">10252</div>
<div style="left:586.70px;top:643.60px;font-size:13px;line-height:18px;color:#1e252f;letter-spacing:-0.150px;">SUPRD</div>
<div style="left:725.18px;top:643.60px;font-size:13.5px;line-height:18px;color:#1e252f;font-kerning:none;">4</div>
<div style="left:759.30px;top:643.60px;font-size:13.5px;line-height:18px;color:#1e252f;font-kerning:none;letter-spacing:0.762px;">2020-12-17 00:00:00.000</div>
<div style="left:947.30px;top:643.60px;font-size:13.5px;line-height:18px;color:#1e252f;font-kerning:none;letter-spacing:0.762px;">1996-08-06 00:00:00.000</div>
<div style="left:1133.30px;top:643.60px;font-size:13.5px;line-height:18px;color:#1e252f;font-kerning:none;letter-spacing:0.762px;">1996-07-11 00:00:00.000</div>
<div style="left:1343.28px;top:643.60px;font-size:13.5px;line-height:18px;color:#1e252f;font-kerning:none;">2</div>
<div class="clip" style="left:1365px;top:643.6px;width:189px;height:18px"><div style="left:5.13px;top:0;font-size:13.5px;line-height:18px;color:#1e252f;font-kerning:none;letter-spacing:0.858px">51.300000000000000000</div></div>
<div class="clip" style="left:1555px;top:643.6px;width:57px;height:18px"><div style="left:11.7px;top:0;font-size:13px;line-height:18px;color:#1e252f;letter-spacing:0.35px">Suprêmes délices</div></div>
<div style="left:491.38px;top:673.60px;font-size:13px;line-height:18px;color:#9ba6bd;font-kerning:none;">9</div>
<div style="left:520.70px;top:673.60px;font-size:13.5px;line-height:18px;color:#1e252f;font-kerning:none;letter-spacing:0.613px;">10249</div>
<div style="left:586.70px;top:673.60px;font-size:13px;line-height:18px;color:#1e252f;letter-spacing:-0.150px;">TOMSP</div>
<div style="left:725.18px;top:673.60px;font-size:13.5px;line-height:18px;color:#1e252f;font-kerning:none;">6</div>
<div style="left:759.30px;top:673.60px;font-size:13.5px;line-height:18px;color:#1e252f;font-kerning:none;letter-spacing:0.762px;">2020-12-16 00:00:00.000</div>
<div style="left:947.30px;top:673.60px;font-size:13.5px;line-height:18px;color:#1e252f;font-kerning:none;letter-spacing:0.762px;">1996-08-16 00:00:00.000</div>
<div style="left:1133.30px;top:673.60px;font-size:13.5px;line-height:18px;color:#1e252f;font-kerning:none;letter-spacing:0.762px;">1996-07-10 00:00:00.000</div>
<div style="left:1343.28px;top:673.60px;font-size:13.5px;line-height:18px;color:#1e252f;font-kerning:none;">1</div>
<div class="clip" style="left:1365px;top:673.6px;width:189px;height:18px"><div style="left:5.13px;top:0;font-size:13.5px;line-height:18px;color:#1e252f;font-kerning:none;letter-spacing:0.858px">11.610000000000000000</div></div>
<div class="clip" style="left:1555px;top:673.6px;width:57px;height:18px"><div style="left:11.7px;top:0;font-size:13px;line-height:18px;color:#1e252f;letter-spacing:0.35px">Toms Spezialitäten</div></div>
<div style="left:487.37px;top:703.60px;font-size:13px;line-height:18px;color:#9ba6bd;font-kerning:none;letter-spacing:0.800px;">10</div>
<div style="left:520.70px;top:703.60px;font-size:13.5px;line-height:18px;color:#1e252f;font-kerning:none;letter-spacing:0.613px;">10256</div>
<div style="left:586.70px;top:703.60px;font-size:13px;line-height:18px;color:#1e252f;letter-spacing:-0.150px;">WELLI</div>
<div style="left:725.18px;top:703.60px;font-size:13.5px;line-height:18px;color:#1e252f;font-kerning:none;">3</div>
<div style="left:759.30px;top:703.60px;font-size:13.5px;line-height:18px;color:#1e252f;font-kerning:none;letter-spacing:0.762px;">2020-12-16 00:00:00.000</div>
<div style="left:947.30px;top:703.60px;font-size:13.5px;line-height:18px;color:#1e252f;font-kerning:none;letter-spacing:0.762px;">1996-08-12 00:00:00.000</div>
<div style="left:1133.30px;top:703.60px;font-size:13.5px;line-height:18px;color:#1e252f;font-kerning:none;letter-spacing:0.762px;">1996-07-17 00:00:00.000</div>
<div style="left:1343.28px;top:703.60px;font-size:13.5px;line-height:18px;color:#1e252f;font-kerning:none;">2</div>
<div class="clip" style="left:1365px;top:703.6px;width:189px;height:18px"><div style="left:5.13px;top:0;font-size:13.5px;line-height:18px;color:#1e252f;font-kerning:none;letter-spacing:0.858px">13.970000000000000000</div></div>
<div class="clip" style="left:1555px;top:703.6px;width:57px;height:18px"><div style="left:11.7px;top:0;font-size:13px;line-height:18px;color:#1e252f;letter-spacing:0.35px">Wellington Importadora</div></div>
<div style="left:487.37px;top:733.60px;font-size:13px;line-height:18px;color:#9ba6bd;font-kerning:none;letter-spacing:0.800px;">11</div>
<div style="left:520.70px;top:733.60px;font-size:13.5px;line-height:18px;color:#1e252f;font-kerning:none;letter-spacing:0.613px;">11077</div>
<div style="left:586.70px;top:733.60px;font-size:13px;line-height:18px;color:#1e252f;letter-spacing:-0.150px;">RATTC</div>
<div style="left:725.18px;top:733.60px;font-size:13.5px;line-height:18px;color:#1e252f;font-kerning:none;">1</div>
<div style="left:759.30px;top:733.60px;font-size:13.5px;line-height:18px;color:#1e252f;font-kerning:none;letter-spacing:0.762px;">1998-05-06 00:00:00.000</div>
<div style="left:947.30px;top:733.60px;font-size:13.5px;line-height:18px;color:#1e252f;font-kerning:none;letter-spacing:0.762px;">1998-06-03 00:00:00.000</div>
<div style="left:1132.50px;top:733.60px;font-size:13px;line-height:18px;color:#a3b0c9;letter-spacing:0.250px;">null</div>
<div style="left:1343.28px;top:733.60px;font-size:13.5px;line-height:18px;color:#1e252f;font-kerning:none;">2</div>
<div class="clip" style="left:1365px;top:733.6px;width:189px;height:18px"><div style="left:13.50px;top:0;font-size:13.5px;line-height:18px;color:#1e252f;font-kerning:none;letter-spacing:0.858px">8.530000000000000000</div></div>
<div class="clip" style="left:1555px;top:733.6px;width:57px;height:18px"><div style="left:11.7px;top:0;font-size:13px;line-height:18px;color:#1e252f;letter-spacing:0.35px">Rattlesnake Canyon Grocery</div></div>
<div style="left:487.37px;top:763.60px;font-size:13px;line-height:18px;color:#9ba6bd;font-kerning:none;letter-spacing:0.800px;">12</div>
<div style="left:520.70px;top:763.60px;font-size:13.5px;line-height:18px;color:#1e252f;font-kerning:none;letter-spacing:0.613px;">11076</div>
<div style="left:586.70px;top:763.60px;font-size:13px;line-height:18px;color:#1e252f;letter-spacing:-0.150px;">BONAP</div>
<div style="left:725.18px;top:763.60px;font-size:13.5px;line-height:18px;color:#1e252f;font-kerning:none;">4</div>
<div style="left:759.30px;top:763.60px;font-size:13.5px;line-height:18px;color:#1e252f;font-kerning:none;letter-spacing:0.762px;">1998-05-06 00:00:00.000</div>
<div style="left:947.30px;top:763.60px;font-size:13.5px;line-height:18px;color:#1e252f;font-kerning:none;letter-spacing:0.762px;">1998-06-03 00:00:00.000</div>
<div style="left:1132.50px;top:763.60px;font-size:13px;line-height:18px;color:#a3b0c9;letter-spacing:0.250px;">null</div>
<div style="left:1343.28px;top:763.60px;font-size:13.5px;line-height:18px;color:#1e252f;font-kerning:none;">2</div>
<div class="clip" style="left:1365px;top:763.6px;width:189px;height:18px"><div style="left:5.13px;top:0;font-size:13.5px;line-height:18px;color:#1e252f;font-kerning:none;letter-spacing:0.858px">38.280000000000000000</div></div>
<div class="clip" style="left:1555px;top:763.6px;width:57px;height:18px"><div style="left:11.7px;top:0;font-size:13px;line-height:18px;color:#1e252f;letter-spacing:0.35px">Bon app'</div></div>
<div style="left:487.37px;top:793.60px;font-size:13px;line-height:18px;color:#9ba6bd;font-kerning:none;letter-spacing:0.800px;">13</div>
<div style="left:520.70px;top:793.60px;font-size:13.5px;line-height:18px;color:#1e252f;font-kerning:none;letter-spacing:0.613px;">11075</div>
<div style="left:586.70px;top:793.60px;font-size:13px;line-height:18px;color:#1e252f;letter-spacing:-0.150px;">RICSU</div>
<div style="left:725.18px;top:793.60px;font-size:13.5px;line-height:18px;color:#1e252f;font-kerning:none;">8</div>
<div style="left:759.30px;top:793.60px;font-size:13.5px;line-height:18px;color:#1e252f;font-kerning:none;letter-spacing:0.762px;">1998-05-06 00:00:00.000</div>
<div style="left:947.30px;top:793.60px;font-size:13.5px;line-height:18px;color:#1e252f;font-kerning:none;letter-spacing:0.762px;">1998-06-03 00:00:00.000</div>
<div style="left:1132.50px;top:793.60px;font-size:13px;line-height:18px;color:#a3b0c9;letter-spacing:0.250px;">null</div>
<div style="left:1343.28px;top:793.60px;font-size:13.5px;line-height:18px;color:#1e252f;font-kerning:none;">2</div>
<div class="clip" style="left:1365px;top:793.6px;width:189px;height:18px"><div style="left:13.50px;top:0;font-size:13.5px;line-height:18px;color:#1e252f;font-kerning:none;letter-spacing:0.858px">6.190000000000000000</div></div>
<div class="clip" style="left:1555px;top:793.6px;width:57px;height:18px"><div style="left:11.7px;top:0;font-size:13px;line-height:18px;color:#1e252f;letter-spacing:0.35px">Richter Supermarkt</div></div>
<div style="left:487.37px;top:823.60px;font-size:13px;line-height:18px;color:#9ba6bd;font-kerning:none;letter-spacing:0.800px;">14</div>
<div style="left:520.70px;top:823.60px;font-size:13.5px;line-height:18px;color:#1e252f;font-kerning:none;letter-spacing:0.613px;">11074</div>
<div style="left:586.70px;top:823.60px;font-size:13px;line-height:18px;color:#1e252f;letter-spacing:-0.150px;">SIMOB</div>
<div style="left:725.18px;top:823.60px;font-size:13.5px;line-height:18px;color:#1e252f;font-kerning:none;">7</div>
<div style="left:759.30px;top:823.60px;font-size:13.5px;line-height:18px;color:#1e252f;font-kerning:none;letter-spacing:0.762px;">1998-05-06 00:00:00.000</div>
<div style="left:947.30px;top:823.60px;font-size:13.5px;line-height:18px;color:#1e252f;font-kerning:none;letter-spacing:0.762px;">1998-06-03 00:00:00.000</div>
<div style="left:1132.50px;top:823.60px;font-size:13px;line-height:18px;color:#a3b0c9;letter-spacing:0.250px;">null</div>
<div style="left:1343.28px;top:823.60px;font-size:13.5px;line-height:18px;color:#1e252f;font-kerning:none;">2</div>
<div class="clip" style="left:1365px;top:823.6px;width:189px;height:18px"><div style="left:5.13px;top:0;font-size:13.5px;line-height:18px;color:#1e252f;font-kerning:none;letter-spacing:0.858px">18.440000000000000000</div></div>
<div class="clip" style="left:1555px;top:823.6px;width:57px;height:18px"><div style="left:11.7px;top:0;font-size:13px;line-height:18px;color:#1e252f;letter-spacing:0.35px">Simons bistro</div></div>
<div style="left:487.37px;top:853.60px;font-size:13px;line-height:18px;color:#9ba6bd;font-kerning:none;letter-spacing:0.800px;">15</div>
<div style="left:520.70px;top:853.60px;font-size:13.5px;line-height:18px;color:#1e252f;font-kerning:none;letter-spacing:0.613px;">11070</div>
<div style="left:586.70px;top:853.60px;font-size:13px;line-height:18px;color:#1e252f;letter-spacing:-0.150px;">LEHMS</div>
<div style="left:725.18px;top:853.60px;font-size:13.5px;line-height:18px;color:#1e252f;font-kerning:none;">2</div>
<div style="left:759.30px;top:853.60px;font-size:13.5px;line-height:18px;color:#1e252f;font-kerning:none;letter-spacing:0.762px;">1998-05-05 00:00:00.000</div>
<div style="left:947.30px;top:853.60px;font-size:13.5px;line-height:18px;color:#1e252f;font-kerning:none;letter-spacing:0.762px;">1998-06-02 00:00:00.000</div>
<div style="left:1132.50px;top:853.60px;font-size:13px;line-height:18px;color:#a3b0c9;letter-spacing:0.250px;">null</div>
<div style="left:1343.28px;top:853.60px;font-size:13.5px;line-height:18px;color:#1e252f;font-kerning:none;">1</div>
<div class="clip" style="left:1365px;top:853.6px;width:189px;height:18px"><div style="left:-3.23px;top:0;font-size:13.5px;line-height:18px;color:#1e252f;font-kerning:none;letter-spacing:0.858px">136.000000000000000000</div></div>
<div class="clip" style="left:1555px;top:853.6px;width:57px;height:18px"><div style="left:11.7px;top:0;font-size:13px;line-height:18px;color:#1e252f;letter-spacing:0.35px">Lehmanns Marktstand</div></div>
<div style="left:487.37px;top:883.60px;font-size:13px;line-height:18px;color:#9ba6bd;font-kerning:none;letter-spacing:0.800px;">16</div>
<div style="left:520.70px;top:883.60px;font-size:13.5px;line-height:18px;color:#1e252f;font-kerning:none;letter-spacing:0.613px;">11071</div>
<div style="left:586.70px;top:883.60px;font-size:13px;line-height:18px;color:#1e252f;letter-spacing:-0.150px;">LILAS</div>
<div style="left:725.18px;top:883.60px;font-size:13.5px;line-height:18px;color:#1e252f;font-kerning:none;">1</div>
<div style="left:759.30px;top:883.60px;font-size:13.5px;line-height:18px;color:#1e252f;font-kerning:none;letter-spacing:0.762px;">1998-05-05 00:00:00.000</div>
<div style="left:947.30px;top:883.60px;font-size:13.5px;line-height:18px;color:#1e252f;font-kerning:none;letter-spacing:0.762px;">1998-06-02 00:00:00.000</div>
<div style="left:1132.50px;top:883.60px;font-size:13px;line-height:18px;color:#a3b0c9;letter-spacing:0.250px;">null</div>
<div style="left:1343.28px;top:883.60px;font-size:13.5px;line-height:18px;color:#1e252f;font-kerning:none;">1</div>
<div class="clip" style="left:1365px;top:883.6px;width:189px;height:18px"><div style="left:13.50px;top:0;font-size:13.5px;line-height:18px;color:#1e252f;font-kerning:none;letter-spacing:0.858px">0.930000000000000000</div></div>
<div class="clip" style="left:1555px;top:883.6px;width:57px;height:18px"><div style="left:11.7px;top:0;font-size:13px;line-height:18px;color:#1e252f;letter-spacing:0.35px">LILA-Supermercado</div></div>
<div style="left:487.37px;top:913.60px;font-size:13px;line-height:18px;color:#9ba6bd;font-kerning:none;letter-spacing:0.800px;">17</div>
<div style="left:520.70px;top:913.60px;font-size:13.5px;line-height:18px;color:#1e252f;font-kerning:none;letter-spacing:0.613px;">11073</div>
<div style="left:586.70px;top:913.60px;font-size:13px;line-height:18px;color:#1e252f;letter-spacing:-0.150px;">PERIC</div>
<div style="left:725.18px;top:913.60px;font-size:13.5px;line-height:18px;color:#1e252f;font-kerning:none;">2</div>
<div style="left:759.30px;top:913.60px;font-size:13.5px;line-height:18px;color:#1e252f;font-kerning:none;letter-spacing:0.762px;">1998-05-05 00:00:00.000</div>
<div style="left:947.30px;top:913.60px;font-size:13.5px;line-height:18px;color:#1e252f;font-kerning:none;letter-spacing:0.762px;">1998-06-02 00:00:00.000</div>
<div style="left:1132.50px;top:913.60px;font-size:13px;line-height:18px;color:#a3b0c9;letter-spacing:0.250px;">null</div>
<div style="left:1343.28px;top:913.60px;font-size:13.5px;line-height:18px;color:#1e252f;font-kerning:none;">2</div>
<div class="clip" style="left:1365px;top:913.6px;width:189px;height:18px"><div style="left:5.13px;top:0;font-size:13.5px;line-height:18px;color:#1e252f;font-kerning:none;letter-spacing:0.858px">24.950000000000000000</div></div>
<div class="clip" style="left:1555px;top:913.6px;width:57px;height:18px"><div style="left:11.7px;top:0;font-size:13px;line-height:18px;color:#1e252f;letter-spacing:0.35px">Pericles Comidas clásicas</div></div>
<div style="left:487.37px;top:943.60px;font-size:13px;line-height:18px;color:#9ba6bd;font-kerning:none;letter-spacing:0.800px;">18</div>
<div style="left:520.70px;top:943.60px;font-size:13.5px;line-height:18px;color:#1e252f;font-kerning:none;letter-spacing:0.613px;">11072</div>
<div style="left:586.70px;top:943.60px;font-size:13px;line-height:18px;color:#1e252f;letter-spacing:-0.150px;">ERNSH</div>
<div style="left:725.18px;top:943.60px;font-size:13.5px;line-height:18px;color:#1e252f;font-kerning:none;">4</div>
<div style="left:759.30px;top:943.60px;font-size:13.5px;line-height:18px;color:#1e252f;font-kerning:none;letter-spacing:0.762px;">1998-05-05 00:00:00.000</div>
<div style="left:947.30px;top:943.60px;font-size:13.5px;line-height:18px;color:#1e252f;font-kerning:none;letter-spacing:0.762px;">1998-06-02 00:00:00.000</div>
<div style="left:1132.50px;top:943.60px;font-size:13px;line-height:18px;color:#a3b0c9;letter-spacing:0.250px;">null</div>
<div style="left:1343.28px;top:943.60px;font-size:13.5px;line-height:18px;color:#1e252f;font-kerning:none;">2</div>
<div class="clip" style="left:1365px;top:943.6px;width:189px;height:18px"><div style="left:-11.60px;top:0;font-size:13.5px;line-height:18px;color:#1e252f;font-kerning:none;letter-spacing:0.858px">1258.640000000000000000</div></div>
<div class="clip" style="left:1555px;top:943.6px;width:57px;height:18px"><div style="left:11.7px;top:0;font-size:13px;line-height:18px;color:#1e252f;letter-spacing:0.35px">Ernst Handel</div></div>
<div style="left:487.37px;top:973.60px;font-size:13px;line-height:18px;color:#9ba6bd;font-kerning:none;letter-spacing:0.800px;">19</div>
<div style="left:520.70px;top:973.60px;font-size:13.5px;line-height:18px;color:#1e252f;font-kerning:none;letter-spacing:0.613px;">11069</div>
<div style="left:586.70px;top:973.60px;font-size:13px;line-height:18px;color:#1e252f;letter-spacing:-0.150px;">TORTU</div>
<div style="left:725.18px;top:973.60px;font-size:13.5px;line-height:18px;color:#1e252f;font-kerning:none;">1</div>
<div style="left:759.30px;top:973.60px;font-size:13.5px;line-height:18px;color:#1e252f;font-kerning:none;letter-spacing:0.762px;">1998-05-04 00:00:00.000</div>
<div style="left:947.30px;top:973.60px;font-size:13.5px;line-height:18px;color:#1e252f;font-kerning:none;letter-spacing:0.762px;">1998-06-01 00:00:00.000</div>
<div style="left:1133.30px;top:973.60px;font-size:13.5px;line-height:18px;color:#1e252f;font-kerning:none;letter-spacing:0.762px;">1998-05-06 00:00:00.000</div>
<div style="left:1343.28px;top:973.60px;font-size:13.5px;line-height:18px;color:#1e252f;font-kerning:none;">2</div>
<div class="clip" style="left:1365px;top:973.6px;width:189px;height:18px"><div style="left:5.13px;top:0;font-size:13.5px;line-height:18px;color:#1e252f;font-kerning:none;letter-spacing:0.858px">15.670000000000000000</div></div>
<div class="clip" style="left:1555px;top:973.6px;width:57px;height:18px"><div style="left:11.7px;top:0;font-size:13px;line-height:18px;color:#1e252f;letter-spacing:0.35px">Tortuga Restaurante</div></div>
<div style="left:487.37px;top:1003.60px;font-size:13px;line-height:18px;color:#9ba6bd;font-kerning:none;letter-spacing:0.800px;">20</div>
<div style="left:520.70px;top:1003.60px;font-size:13.5px;line-height:18px;color:#1e252f;font-kerning:none;letter-spacing:0.613px;">11068</div>
<div style="left:586.70px;top:1003.60px;font-size:13px;line-height:18px;color:#1e252f;letter-spacing:-0.150px;">QUEEN</div>
<div style="left:725.18px;top:1003.60px;font-size:13.5px;line-height:18px;color:#1e252f;font-kerning:none;">8</div>
<div style="left:759.30px;top:1003.60px;font-size:13.5px;line-height:18px;color:#1e252f;font-kerning:none;letter-spacing:0.762px;">1998-05-04 00:00:00.000</div>
<div style="left:947.30px;top:1003.60px;font-size:13.5px;line-height:18px;color:#1e252f;font-kerning:none;letter-spacing:0.762px;">1998-06-01 00:00:00.000</div>
<div style="left:1132.50px;top:1003.60px;font-size:13px;line-height:18px;color:#a3b0c9;letter-spacing:0.250px;">null</div>
<div style="left:1343.28px;top:1003.60px;font-size:13.5px;line-height:18px;color:#1e252f;font-kerning:none;">2</div>
<div class="clip" style="left:1365px;top:1003.6px;width:189px;height:18px"><div style="left:5.13px;top:0;font-size:13.5px;line-height:18px;color:#1e252f;font-kerning:none;letter-spacing:0.858px">81.750000000000000000</div></div>
<div class="clip" style="left:1555px;top:1003.6px;width:57px;height:18px"><div style="left:11.7px;top:0;font-size:13px;line-height:18px;color:#1e252f;letter-spacing:0.35px">Queen Cozinha</div></div>
<div style="left:479px;top:1022px;width:1148px;height:14px;background:#fbfbfc;"></div>
<div style="left:479px;top:1021px;width:1133px;height:1px;background:#e4e4e7;"></div>
<div style="left:1613px;top:394px;width:14px;height:628px;background:radial-gradient(circle,#efeff1 0.55px,transparent 0.9px) 0 0/3px 3px;"></div>
<div style="left:479px;top:1022px;width:1148px;height:14px;background:radial-gradient(circle,#efeff1 0.55px,transparent 0.9px) 0 0/3px 3px;"></div>
<div style="left:485px;top:1024.5px;width:704px;height:8.5px;background:#7b7b7b;border-radius:5px;"></div>
<div style="left:1616px;top:395px;width:7px;height:18px;background:#7b7b7b;border-radius:4px;"></div>
</div></div>
</div>
</body></html>
